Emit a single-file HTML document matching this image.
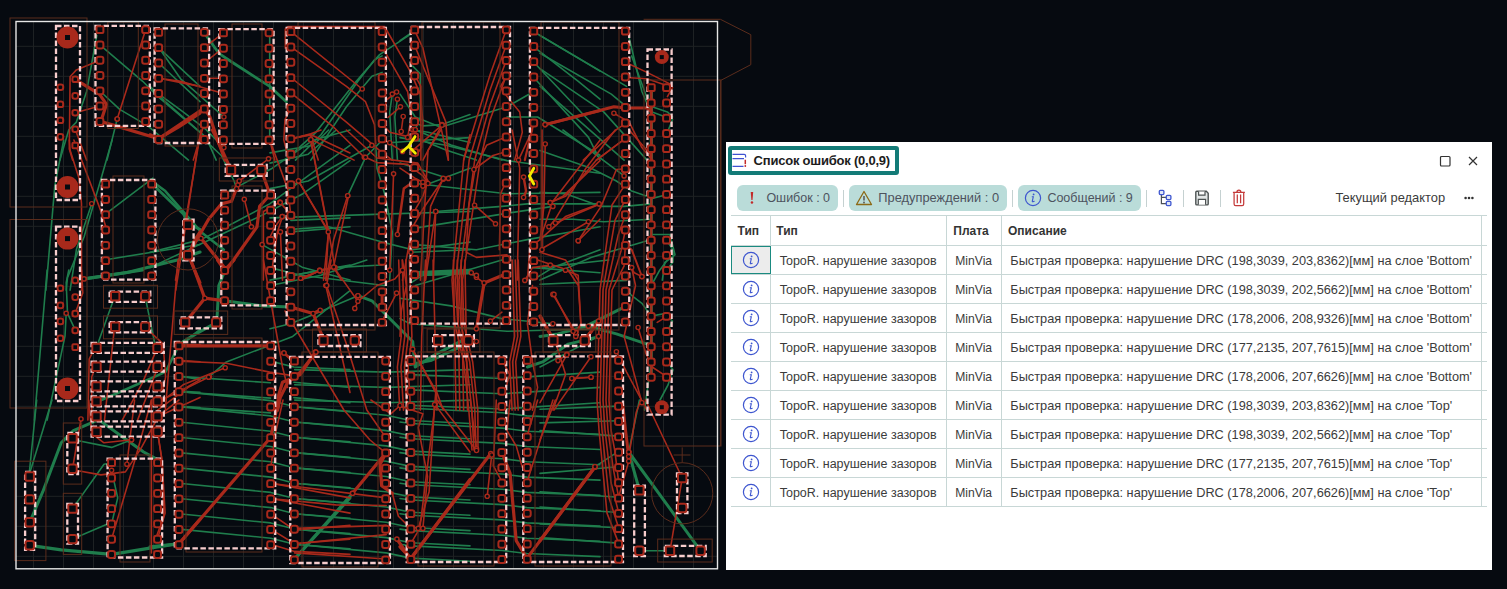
<!DOCTYPE html>
<html><head><meta charset="utf-8">
<style>
html,body{margin:0;padding:0;background:#060a10;width:1507px;height:589px;overflow:hidden;position:relative;font-family:"Liberation Sans",sans-serif}
</style></head><body>
<svg width="760" height="589" viewBox="0 0 760 589" style="position:absolute;left:0;top:0">
<style>.d{fill:none;stroke:#f7cdcd;stroke-width:2.3;stroke-dasharray:5.5 2.5} .b{fill:none;stroke:#5a2c1c;stroke-width:1} .p{fill:#060a10;stroke:#a8291b;stroke-width:2.0} .v{fill:#060a10;stroke:#a8291b;stroke-width:1.4} .tr{fill:none;stroke:#a8291b;stroke-linecap:round;stroke-linejoin:round} .tg{fill:none;stroke:#1f7d4c;stroke-linecap:round;stroke-linejoin:round}</style>
<path d="M33.5 21.5V568.8 M63.5 21.5V568.8 M93.5 21.5V568.8 M123.5 21.5V568.8 M153.5 21.5V568.8 M183.5 21.5V568.8 M213.5 21.5V568.8 M243.5 21.5V568.8 M273.5 21.5V568.8 M303.5 21.5V568.8 M333.5 21.5V568.8 M363.5 21.5V568.8 M393.5 21.5V568.8 M423.5 21.5V568.8 M453.5 21.5V568.8 M483.5 21.5V568.8 M513.5 21.5V568.8 M543.5 21.5V568.8 M573.5 21.5V568.8 M603.5 21.5V568.8 M633.5 21.5V568.8 M663.5 21.5V568.8 M693.5 21.5V568.8 M16 46.3H717 M16 76.3H717 M16 106.3H717 M16 136.3H717 M16 166.3H717 M16 196.3H717 M16 226.3H717 M16 256.3H717 M16 286.3H717 M16 316.3H717 M16 346.3H717 M16 376.3H717 M16 406.3H717 M16 436.3H717 M16 466.3H717 M16 496.3H717 M16 526.3H717 M16 556.3H717" stroke="#1e2224" stroke-width="1" fill="none"/>
<path d="M643.6 19.3H720.4L750.8 34.7V64.7L720.4 80.6V446" class="b"/>
<path d="M96.8 35.5 L86.6 91.5 L76.4 122.1 L68.8 129.7 L59.9 160.1" class="tg" stroke-width="1.6"/>
<path d="M99.9 44.9 L142.7 81.3 L158.0 96.6 L200.0 132.3" class="tg" stroke-width="1.6"/>
<path d="M99.9 91.0 L119.7 109.4 L147.8 125.9 L188.5 160.1" class="tg" stroke-width="1.6"/>
<path d="M117.2 119.0 L107.0 160.1" class="tg" stroke-width="1.6"/>
<path d="M158.7 47.7 L178.3 66.1 L200.0 86.4" class="tg" stroke-width="1.6"/>
<path d="M158.7 63.0 L200.0 101.7" class="tg" stroke-width="1.6"/>
<path d="M204.3 32.9 L218.8 53.3 L234.1 63.5 L269.7 86.4 L286.3 101.7" class="tg" stroke-width="2.8"/>
<path d="M158.9 47.7 L180.6 78.8 L201.0 96.6 L223.9 117.0" class="tg" stroke-width="1.6"/>
<path d="M158.9 94.1 L183.1 111.9 L206.1 129.7 L223.9 147.6" class="tg" stroke-width="1.6"/>
<path d="M150.0 86.4 L165.3 101.7 L206.1 137.4 L216.2 160.1" class="tg" stroke-width="1.6"/>
<path d="M269.7 32.9 L269.7 139.9" class="tg" stroke-width="1.6"/>
<path d="M412.7 32.9 L379.6 54.6 L354.1 83.9 L315.9 132.3 L285.3 160.1" class="tg" stroke-width="1.6"/>
<path d="M382.1 55.9 L374.5 59.7 L357.9 81.3 L321.0 134.8 L295.5 160.1" class="tg" stroke-width="1.6"/>
<path d="M382.1 72.4 L371.9 76.2 L346.4 106.8 L310.8 160.1" class="tg" stroke-width="1.6"/>
<path d="M470.0 114.5 L442.0 124.6 L422.9 125.9 L412.7 122.1" class="tg" stroke-width="1.6"/>
<path d="M470.0 142.5 L428.0 132.3 L412.7 129.7" class="tg" stroke-width="1.6"/>
<path d="M412.7 66.1 L420.3 73.7 L420.3 117.0 L415.2 129.7" class="tg" stroke-width="1.6"/>
<path d="M392.3 94.1 L389.7 111.9 L392.3 160.1" class="tg" stroke-width="1.6"/>
<path d="M397.4 99.2 L394.8 117.0 L397.4 160.1" class="tg" stroke-width="1.6"/>
<path d="M533.8 31.7 L600.0 71.1" class="tg" stroke-width="1.6"/>
<path d="M533.8 46.9 L578.3 81.3 L600.0 99.2" class="tg" stroke-width="1.6"/>
<path d="M533.8 62.2 L600.0 132.3" class="tg" stroke-width="1.6"/>
<path d="M533.8 77.5 L588.5 137.4 L600.0 160.1" class="tg" stroke-width="1.6"/>
<path d="M400.0 40.6 L414.8 30.4" class="tg" stroke-width="1.6"/>
<path d="M400.0 94.1 L415.3 117.0 L440.8 127.2 L507.0 106.8 L533.8 91.5" class="tg" stroke-width="1.6"/>
<path d="M415.3 129.7 L451.0 145.0 L501.9 160.1" class="tg" stroke-width="1.6"/>
<path d="M415.3 137.4 L445.9 150.1 L476.4 160.1" class="tg" stroke-width="1.6"/>
<path d="M507.0 117.0 L537.6 117.0 L600.0 155.2" class="tg" stroke-width="1.6"/>
<path d="M651.3 87.7 L651.3 160.1" class="tg" stroke-width="3.0"/>
<path d="M540.0 35.5 L626.6 86.4" class="tg" stroke-width="1.6"/>
<path d="M540.0 53.3 L611.3 94.1 L626.6 106.8" class="tg" stroke-width="1.6"/>
<path d="M540.0 68.6 L603.7 111.9 L647.0 160.1" class="tg" stroke-width="1.6"/>
<path d="M540.0 86.4 L624.1 160.1" class="tg" stroke-width="1.6"/>
<path d="M629.2 38.0 L641.9 91.5 L649.6 109.4" class="tg" stroke-width="1.6"/>
<path d="M631.7 55.9 L652.1 111.9 L672.5 119.6 L667.4 132.3" class="tg" stroke-width="1.6"/>
<path d="M652.1 106.8 L667.4 111.9 L672.5 117.0" class="tg" stroke-width="1.6"/>
<path d="M63.7 140.0 L54.8 185.9 L45.9 290.1" class="tg" stroke-width="1.6"/>
<path d="M112.1 140.0 L101.9 175.7 L84.1 236.8 L67.5 277.6 L66.2 290.1" class="tg" stroke-width="1.6"/>
<path d="M91.7 203.7 L76.4 249.6 L70.1 290.1" class="tg" stroke-width="1.6"/>
<path d="M152.9 178.2 L105.7 213.9" class="tg" stroke-width="1.6"/>
<path d="M152.9 184.6 L183.4 213.9 L188.5 224.1 L200.0 229.2" class="tg" stroke-width="2.8"/>
<path d="M105.7 259.7 L200.0 244.5" class="tg" stroke-width="1.6"/>
<path d="M75.2 280.1 L127.4 272.5 L178.3 259.7 L200.0 252.1" class="tg" stroke-width="3.2"/>
<path d="M150.0 179.7 L165.3 191.1 L201.0 231.9 L223.9 249.7" class="tg" stroke-width="2.5"/>
<path d="M201.0 136.4 L221.3 155.5 L234.1 181.0 L236.6 188.6" class="tg" stroke-width="1.6"/>
<path d="M350.0 130.0 L313.1 140.2 L272.3 168.2 L234.1 188.6 L223.9 193.7" class="tg" stroke-width="1.6"/>
<path d="M350.0 145.3 L308.0 175.9 L269.7 203.9 L226.4 226.8 L201.0 239.6 L150.0 252.3" class="tg" stroke-width="1.6"/>
<path d="M350.0 160.6 L302.9 193.7 L264.6 214.1 L226.4 231.9 L150.0 267.6" class="tg" stroke-width="1.6"/>
<path d="M290.9 220.4 L350.0 217.9" class="tg" stroke-width="1.6"/>
<path d="M290.9 231.9 L350.0 226.8" class="tg" stroke-width="1.6"/>
<path d="M262.1 244.6 L302.9 267.6 L350.0 280.1" class="tg" stroke-width="1.6"/>
<path d="M270.0 152.9 L313.3 145.3 L328.6 130.0" class="tg" stroke-width="1.6"/>
<path d="M270.0 163.1 L308.2 154.2 L336.2 130.0" class="tg" stroke-width="1.6"/>
<path d="M470.0 137.6 L422.9 140.2 L389.7 142.7" class="tg" stroke-width="1.6"/>
<path d="M270.0 217.9 L382.1 214.1 L470.0 211.5" class="tg" stroke-width="1.6"/>
<path d="M290.4 229.4 L328.6 226.8 L382.1 242.1 L412.7 249.7 L470.0 242.1" class="tg" stroke-width="1.6"/>
<path d="M270.0 188.6 L308.2 181.0 L371.9 145.3" class="tg" stroke-width="1.6"/>
<path d="M347.7 195.7 L365.5 157.3 L382.1 140.2" class="tg" stroke-width="1.6"/>
<path d="M382.1 265.0 L333.7 267.6 L270.0 280.1" class="tg" stroke-width="1.6"/>
<path d="M410.9 252.3 L470.0 249.7" class="tg" stroke-width="1.6"/>
<path d="M470.0 168.2 L422.9 186.1" class="tg" stroke-width="1.6"/>
<path d="M375.7 145.3 L377.0 168.2 L384.6 193.7 L392.3 231.9 L389.7 280.1" class="tg" stroke-width="1.6"/>
<path d="M410.9 282.9 L422.9 275.2 L470.0 272.7" class="tg" stroke-width="1.6"/>
<path d="M400.0 137.6 L445.9 145.3 L507.0 160.6 L600.0 173.3" class="tg" stroke-width="1.6"/>
<path d="M400.0 163.1 L448.4 178.4" class="tg" stroke-width="1.6"/>
<path d="M415.3 183.5 L507.0 193.7 L600.0 192.4" class="tg" stroke-width="1.6"/>
<path d="M435.7 211.5 L501.9 206.4 L527.4 203.9 L600.0 203.9" class="tg" stroke-width="1.6"/>
<path d="M415.3 228.1 L501.9 214.1 L552.9 206.4" class="tg" stroke-width="1.6"/>
<path d="M415.3 244.6 L476.4 249.7 L527.4 239.6 L600.0 226.8" class="tg" stroke-width="1.6"/>
<path d="M410.2 273.9 L471.3 272.7" class="tg" stroke-width="3.0"/>
<path d="M600.0 249.7 L552.9 267.6 L532.5 280.1" class="tg" stroke-width="1.6"/>
<path d="M532.5 267.6 L600.0 272.7" class="tg" stroke-width="1.6"/>
<path d="M562.9 130.0 L624.1 175.9" class="tg" stroke-width="1.6"/>
<path d="M540.0 150.4 L591.0 168.2 L616.4 181.0 L631.7 191.1 L647.0 196.2" class="tg" stroke-width="1.6"/>
<path d="M540.0 192.4 L565.5 193.7 L601.1 206.4 L624.1 206.4 L651.3 203.9" class="tg" stroke-width="1.6"/>
<path d="M540.0 219.2 L573.1 219.2 L603.7 221.7 L651.3 219.2" class="tg" stroke-width="1.6"/>
<path d="M651.3 198.8 L669.9 193.7" class="tg" stroke-width="1.6"/>
<path d="M651.3 234.5 L669.9 234.5 L675.0 254.8 L664.8 262.5 L662.3 280.1" class="tg" stroke-width="1.6"/>
<path d="M540.0 280.1 L591.0 257.4 L651.3 239.6" class="tg" stroke-width="1.6"/>
<path d="M47.1 270.0 L34.4 420.1" class="tg" stroke-width="1.6"/>
<path d="M68.8 270.0 L66.2 282.7 L67.5 313.3 L75.2 329.9" class="tg" stroke-width="1.6"/>
<path d="M66.2 313.3 L65.0 336.2 L47.1 420.1" class="tg" stroke-width="1.6"/>
<path d="M84.1 278.9 L142.7 270.0" class="tg" stroke-width="3.0"/>
<path d="M114.6 296.8 L96.8 346.4" class="tg" stroke-width="1.6"/>
<path d="M145.2 296.8 L155.4 346.4" class="tg" stroke-width="1.6"/>
<path d="M200.0 329.9 L178.3 346.4 L165.6 371.9 L122.3 391.0 L95.5 402.5" class="tg" stroke-width="2.5"/>
<path d="M178.3 375.7 L200.0 379.6" class="tg" stroke-width="1.6"/>
<path d="M178.3 391.0 L200.0 392.3" class="tg" stroke-width="1.6"/>
<path d="M178.3 406.3 L200.0 407.6" class="tg" stroke-width="1.6"/>
<path d="M224.6 271.5 L218.8 285.5 L216.8 322.4 L195.9 333.9 L179.3 344.1" class="tg" stroke-width="3.0"/>
<path d="M224.6 300.8 L263.4 305.9 L290.9 307.1" class="tg" stroke-width="3.0"/>
<path d="M350.0 290.6 L292.7 336.4 L226.4 361.9 L208.6 377.2" class="tg" stroke-width="1.6"/>
<path d="M350.0 265.1 L292.7 275.3" class="tg" stroke-width="1.6"/>
<path d="M270.5 361.1 L293.9 367.0 L350.0 369.6" class="tg" stroke-width="1.6"/>
<path d="M178.8 376.4 L270.5 382.8" class="tg" stroke-width="1.6"/>
<path d="M178.8 391.7 L270.5 398.1" class="tg" stroke-width="1.6"/>
<path d="M178.8 406.5 L270.5 412.9" class="tg" stroke-width="1.6"/>
<path d="M293.9 382.3 L350.0 387.4" class="tg" stroke-width="1.6"/>
<path d="M293.9 397.6 L350.0 402.7" class="tg" stroke-width="1.6"/>
<path d="M357.9 295.7 L371.9 300.8 L412.7 341.5 L415.2 367.0 L435.6 354.3 L470.0 336.4" class="tg" stroke-width="3.0"/>
<path d="M411.4 272.7 L470.0 270.2" class="tg" stroke-width="3.0"/>
<path d="M357.9 295.7 L315.9 313.5 L290.4 323.7 L270.0 328.8" class="tg" stroke-width="1.6"/>
<path d="M270.0 267.6 L300.6 275.3 L384.6 285.5" class="tg" stroke-width="1.6"/>
<path d="M270.0 285.5 L321.0 275.3 L366.8 260.0" class="tg" stroke-width="1.6"/>
<path d="M294.7 369.6 L386.4 372.1 L470.0 369.6" class="tg" stroke-width="1.6"/>
<path d="M294.7 384.8 L386.4 387.4 L470.0 384.8" class="tg" stroke-width="1.6"/>
<path d="M294.7 400.1 L386.4 402.7 L470.0 400.1" class="tg" stroke-width="1.6"/>
<path d="M410.2 275.3 L468.8 272.7 L476.4 275.3" class="tg" stroke-width="3.0"/>
<path d="M415.3 285.5 L501.9 260.0" class="tg" stroke-width="1.6"/>
<path d="M400.0 298.2 L451.0 305.9 L501.9 318.6 L552.9 323.7" class="tg" stroke-width="1.6"/>
<path d="M410.2 364.5 L430.6 360.6 L463.7 345.4 L476.4 341.5" class="tg" stroke-width="3.0"/>
<path d="M400.0 318.6 L410.2 323.7 L507.0 331.3 L600.0 328.8" class="tg" stroke-width="1.6"/>
<path d="M527.4 367.0 L542.7 361.9 L568.2 344.1 L600.0 336.4" class="tg" stroke-width="3.0"/>
<path d="M410.2 374.6 L501.9 378.5 L600.0 372.1" class="tg" stroke-width="1.6"/>
<path d="M410.2 389.9 L501.9 393.8 L600.0 387.4" class="tg" stroke-width="1.6"/>
<path d="M410.2 405.2 L501.9 409.0 L600.0 402.7" class="tg" stroke-width="1.6"/>
<path d="M540.0 267.6 L608.8 260.0" class="tg" stroke-width="1.6"/>
<path d="M540.0 284.2 L626.6 280.4" class="tg" stroke-width="1.6"/>
<path d="M626.6 305.9 L606.2 316.1 L585.9 326.2 L557.8 333.9 L540.0 336.4" class="tg" stroke-width="3.0"/>
<path d="M588.4 326.2 L616.4 333.9 L647.0 344.1" class="tg" stroke-width="3.0"/>
<path d="M625.4 290.6 L641.9 303.3 L651.3 316.1" class="tg" stroke-width="1.6"/>
<path d="M540.0 367.0 L598.6 336.4" class="tg" stroke-width="1.6"/>
<path d="M651.3 361.9 L644.5 410.1" class="tg" stroke-width="1.6"/>
<path d="M667.4 260.0 L659.7 270.2 L651.3 285.5" class="tg" stroke-width="1.6"/>
<path d="M651.3 316.1 L664.8 313.5 L672.5 321.1 L667.4 331.3" class="tg" stroke-width="1.6"/>
<path d="M29.1 474.9 L36.7 400.0" class="tg" stroke-width="1.6"/>
<path d="M30.6 470.3 L52.0 400.0" class="tg" stroke-width="1.6"/>
<path d="M29.7 545.3 L61.2 549.8 L111.6 554.4 L157.5 546.8 L178.9 543.7" class="tg" stroke-width="3.2"/>
<path d="M29.7 522.3 L42.8 491.7 L61.2 442.8 L73.4 430.6 L94.8 421.4" class="tg" stroke-width="3.0"/>
<path d="M72.5 508.6 L104.0 464.2 L111.6 462.7" class="tg" stroke-width="1.6"/>
<path d="M72.5 539.1 L111.6 522.3" class="tg" stroke-width="1.6"/>
<path d="M100.9 421.4 L122.3 436.7 L143.7 452.0 L157.5 459.6" class="tg" stroke-width="3.0"/>
<path d="M111.6 470.3 L117.7 497.9 L111.6 523.9" class="tg" stroke-width="1.6"/>
<path d="M73.4 439.8 L111.6 447.4 L131.5 439.8" class="tg" stroke-width="1.6"/>
<path d="M179.1 406.7 L270.8 415.9 L294.6 422.0 L350.0 426.6" class="tg" stroke-width="1.6"/>
<path d="M179.1 422.0 L270.8 431.2 L294.6 437.3 L350.0 441.9" class="tg" stroke-width="1.6"/>
<path d="M179.1 437.3 L270.8 446.5 L294.6 452.6 L350.0 457.2" class="tg" stroke-width="1.6"/>
<path d="M179.1 452.6 L270.8 461.8 L294.6 467.9 L350.0 472.5" class="tg" stroke-width="1.6"/>
<path d="M179.1 467.9 L270.8 477.1 L294.6 483.2 L350.0 487.8" class="tg" stroke-width="1.6"/>
<path d="M179.1 483.2 L270.8 492.4 L294.6 498.5 L350.0 503.1" class="tg" stroke-width="1.6"/>
<path d="M179.1 498.5 L270.8 507.6 L294.6 513.8 L350.0 518.3" class="tg" stroke-width="1.6"/>
<path d="M179.1 513.8 L270.8 522.9 L294.6 529.1 L350.0 533.6" class="tg" stroke-width="1.6"/>
<path d="M179.1 529.1 L270.8 538.2 L294.6 544.3 L350.0 548.9" class="tg" stroke-width="1.6"/>
<path d="M179.1 391.4 L270.8 400.6 L294.6 406.7 L350.0 411.3" class="tg" stroke-width="1.6"/>
<path d="M294.6 559.0 L350.0 497.9" class="tg" stroke-width="3.0"/>
<path d="M150.0 546.8 L179.1 543.7" class="tg" stroke-width="3.0"/>
<path d="M294.5 406.7 L386.2 415.3 L410.7 420.5 L470.0 423.5" class="tg" stroke-width="1.6"/>
<path d="M294.5 422.0 L386.2 430.6 L410.7 435.8 L470.0 438.8" class="tg" stroke-width="1.6"/>
<path d="M294.5 437.3 L386.2 445.9 L410.7 451.1 L470.0 454.1" class="tg" stroke-width="1.6"/>
<path d="M294.5 452.6 L386.2 461.2 L410.7 466.4 L470.0 469.4" class="tg" stroke-width="1.6"/>
<path d="M294.5 467.9 L386.2 476.5 L410.7 481.7 L470.0 484.7" class="tg" stroke-width="1.6"/>
<path d="M294.5 483.2 L386.2 491.7 L410.7 496.9 L470.0 500.0" class="tg" stroke-width="1.6"/>
<path d="M294.5 498.5 L386.2 507.0 L410.7 512.2 L470.0 515.3" class="tg" stroke-width="1.6"/>
<path d="M294.5 513.8 L386.2 522.3 L410.7 527.5 L470.0 530.6" class="tg" stroke-width="1.6"/>
<path d="M294.5 529.1 L386.2 537.6 L410.7 542.8 L470.0 545.9" class="tg" stroke-width="1.6"/>
<path d="M294.5 544.3 L386.2 552.9 L410.7 558.1 L470.0 561.2" class="tg" stroke-width="1.6"/>
<path d="M294.5 559.0 L352.6 493.3" class="tg" stroke-width="3.0"/>
<path d="M400.0 406.7 L410.7 408.3 L502.4 412.8 L526.9 415.9 L600.0 419.0" class="tg" stroke-width="1.6"/>
<path d="M400.0 422.0 L410.7 423.5 L502.4 428.1 L526.9 431.2 L600.0 434.3" class="tg" stroke-width="1.6"/>
<path d="M400.0 437.3 L410.7 438.8 L502.4 443.4 L526.9 446.5 L600.0 449.5" class="tg" stroke-width="1.6"/>
<path d="M400.0 452.6 L410.7 454.1 L502.4 458.7 L526.9 461.8 L600.0 464.8" class="tg" stroke-width="1.6"/>
<path d="M400.0 467.9 L410.7 469.4 L502.4 474.0 L526.9 477.1 L600.0 480.1" class="tg" stroke-width="1.6"/>
<path d="M400.0 483.2 L410.7 484.7 L502.4 489.3 L526.9 492.4 L600.0 495.4" class="tg" stroke-width="1.6"/>
<path d="M400.0 498.5 L410.7 500.0 L502.4 504.6 L526.9 507.6 L600.0 510.7" class="tg" stroke-width="1.6"/>
<path d="M400.0 513.8 L410.7 515.3 L502.4 519.9 L526.9 522.9 L600.0 526.0" class="tg" stroke-width="1.6"/>
<path d="M400.0 529.1 L410.7 530.6 L502.4 535.2 L526.9 538.2 L600.0 541.3" class="tg" stroke-width="1.6"/>
<path d="M400.0 544.3 L410.7 545.9 L502.4 550.5 L526.9 553.5 L600.0 556.6" class="tg" stroke-width="1.6"/>
<path d="M540.0 409.2 L618.6 406.1" class="tg" stroke-width="1.6"/>
<path d="M540.0 422.9 L618.6 420.8" class="tg" stroke-width="1.6"/>
<path d="M540.0 430.6 L618.6 436.1" class="tg" stroke-width="1.6"/>
<path d="M540.0 473.4 L618.6 466.7" class="tg" stroke-width="1.6"/>
<path d="M540.0 491.7 L618.6 497.2" class="tg" stroke-width="1.6"/>
<path d="M540.0 507.0 L618.6 512.5" class="tg" stroke-width="1.6"/>
<path d="M540.0 523.9 L618.6 527.8" class="tg" stroke-width="1.6"/>
<path d="M540.0 537.6 L618.6 543.1" class="tg" stroke-width="1.6"/>
<path d="M628.7 452.0 L639.4 490.2" class="tg" stroke-width="3.0"/>
<path d="M628.7 452.0 L700.6 550.8" class="tg" stroke-width="3.0"/>
<path d="M639.4 400.0 L628.7 452.0" class="tg" stroke-width="1.6"/>
<path d="M639.4 550.8 L670.0 550.8" class="tg" stroke-width="1.6"/>
<path d="M595.0 466.7 L618.6 451.4" class="tg" stroke-width="1.6"/>
<path d="M651.3 87.7 L651.3 377.2" class="tg" stroke-width="3.0"/>
<path d="M666.6 240.0 L673.0 250.0 L673.0 262.0 L666.6 270.0" class="tg" stroke-width="1.6"/>
<path d="M666.6 360.0 L673.0 370.0 L668.0 385.0 L660.0 400.0" class="tg" stroke-width="1.6"/>
<path d="M75.2 79.3 L99.4 94.1 L106.5 104.3 L101.9 118.3 L99.9 121.3" class="tr" stroke-width="3.2"/>
<path d="M99.9 121.3 L115.9 125.9 L158.7 138.7 L178.3 127.2 L200.0 113.2" class="tr" stroke-width="3.2"/>
<path d="M99.9 60.2 L76.4 69.9 L70.1 76.8 L69.3 148.9 L72.6 160.1" class="tr" stroke-width="1.6"/>
<path d="M75.2 112.7 L99.9 106.1" class="tr" stroke-width="1.6"/>
<path d="M145.7 29.6 L117.2 119.0" class="tr" stroke-width="1.6"/>
<path d="M75.2 129.2 L86.6 160.1" class="tr" stroke-width="1.6"/>
<path d="M158.7 78.3 L200.0 86.4" class="tr" stroke-width="1.6"/>
<path d="M150.0 134.8 L158.9 138.7 L204.3 108.1 L209.9 117.0 L217.5 139.9 L225.2 160.1" class="tr" stroke-width="3.2"/>
<path d="M158.9 78.3 L180.6 81.3 L223.4 93.6" class="tr" stroke-width="1.6"/>
<path d="M204.3 63.0 L223.4 47.7" class="tr" stroke-width="1.6"/>
<path d="M204.3 47.7 L223.4 32.9" class="tr" stroke-width="1.6"/>
<path d="M204.3 78.3 L223.4 78.3" class="tr" stroke-width="1.6"/>
<path d="M204.3 123.4 L193.3 160.1" class="tr" stroke-width="1.6"/>
<path d="M290.9 138.7 L310.5 134.8 L318.2 160.1" class="tr" stroke-width="1.6"/>
<path d="M290.9 108.1 L285.0 119.6 L283.8 139.9 L288.9 160.1" class="tr" stroke-width="1.6"/>
<path d="M269.7 139.9 L274.8 160.1" class="tr" stroke-width="1.6"/>
<path d="M290.9 31.7 L362.2 89.0" class="tr" stroke-width="1.6"/>
<path d="M290.9 46.9 L346.4 86.4 L365.5 101.7 L374.5 124.6 L375.7 143.8" class="tr" stroke-width="1.6"/>
<path d="M290.9 77.5 L346.4 122.1 L382.1 152.7 L392.3 160.1" class="tr" stroke-width="1.6"/>
<path d="M290.9 92.8 L333.7 127.2 L364.3 157.3" class="tr" stroke-width="1.6"/>
<path d="M285.3 48.2 L285.3 29.1 L287.8 26.6 L384.6 26.6 L389.7 35.5 L410.1 71.1 L420.3 94.1 L422.9 122.1 L421.6 147.6 L415.2 156.5" class="tr" stroke-width="1.6"/>
<path d="M382.1 46.9 L397.4 73.7 L407.6 91.5 L411.4 117.0 L407.6 137.4" class="tr" stroke-width="1.6"/>
<path d="M414.7 30.4 L422.9 48.2 L448.3 160.1" class="tr" stroke-width="1.6"/>
<path d="M382.1 123.4 L389.7 132.3 L411.4 137.4" class="tr" stroke-width="1.6"/>
<path d="M382.1 138.7 L402.5 151.4" class="tr" stroke-width="1.6"/>
<path d="M396.6 92.0 L385.9 100.4 L385.9 117.0" class="tr" stroke-width="1.6"/>
<path d="M400.4 106.8 L388.0 117.5" class="tr" stroke-width="1.6"/>
<path d="M403.2 116.5 L401.2 131.5" class="tr" stroke-width="1.6"/>
<path d="M442.0 124.6 L422.9 160.1" class="tr" stroke-width="1.6"/>
<path d="M470.0 134.8 L463.6 160.1" class="tr" stroke-width="1.6"/>
<path d="M310.8 139.4 L354.1 160.1" class="tr" stroke-width="1.6"/>
<path d="M414.8 45.7 L445.9 122.1 L448.4 160.1" class="tr" stroke-width="1.6"/>
<path d="M506.5 76.2 L500.6 86.4 L507.0 96.6 L519.7 111.9 L522.3 132.3 L514.6 160.1" class="tr" stroke-width="1.6"/>
<path d="M533.8 122.1 L524.8 160.1" class="tr" stroke-width="2.2"/>
<path d="M545.2 124.6 L600.0 110.6" class="tr" stroke-width="3.0"/>
<path d="M442.0 125.2 L410.2 152.7" class="tr" stroke-width="1.6"/>
<path d="M415.3 76.2 L420.9 86.4 L420.9 160.1" class="tr" stroke-width="1.6"/>
<path d="M545.1 124.6 L613.9 106.8 L625.4 108.1 L647.0 108.1 L651.3 111.9" class="tr" stroke-width="3.0"/>
<path d="M625.4 62.2 L647.0 72.4 L669.9 83.9 L672.5 87.7 L667.4 96.6" class="tr" stroke-width="1.6"/>
<path d="M625.4 77.5 L647.0 78.8 L662.3 83.9 L667.4 87.7" class="tr" stroke-width="1.6"/>
<path d="M651.3 87.7 L651.3 160.1" class="tr" stroke-width="2.0"/>
<path d="M613.9 113.2 L629.2 122.1 L641.9 147.6 L652.1 160.1" class="tr" stroke-width="1.6"/>
<path d="M625.4 123.4 L616.4 129.7 L583.3 160.1" class="tr" stroke-width="1.6"/>
<path d="M625.4 138.7 L596.1 160.1" class="tr" stroke-width="1.6"/>
<path d="M69.3 140.0 L70.1 150.2 L79.0 178.2 L81.5 203.7 L81.5 290.1" class="tr" stroke-width="1.6"/>
<path d="M73.9 140.0 L86.6 173.1 L101.9 213.9 L105.7 226.6" class="tr" stroke-width="1.6"/>
<path d="M198.7 140.0 L175.8 290.1" class="tr" stroke-width="1.6"/>
<path d="M188.5 255.9 L193.6 241.9 L200.0 231.7" class="tr" stroke-width="3.0"/>
<path d="M188.5 255.9 L200.0 282.7" class="tr" stroke-width="3.0"/>
<path d="M188.2 254.8 L208.6 219.2 L221.3 203.9 L231.5 201.3 L237.9 184.8" class="tr" stroke-width="3.2"/>
<path d="M231.0 170.0 L217.5 140.2 L212.4 130.0" class="tr" stroke-width="3.2"/>
<path d="M261.3 170.0 L269.7 193.7" class="tr" stroke-width="3.2"/>
<path d="M269.7 195.0 L259.6 206.4 L257.0 226.8 L226.4 270.1 L201.0 238.3" class="tr" stroke-width="3.2"/>
<path d="M201.0 130.0 L175.5 280.1" class="tr" stroke-width="1.6"/>
<path d="M268.5 158.8 L239.2 181.0" class="tr" stroke-width="1.6"/>
<path d="M244.3 199.3 L251.4 226.8" class="tr" stroke-width="1.6"/>
<path d="M279.9 202.1 L263.4 211.5 L263.4 280.1" class="tr" stroke-width="1.6"/>
<path d="M282.5 216.6 L277.4 231.9 L272.3 267.6" class="tr" stroke-width="1.6"/>
<path d="M280.4 231.9 L282.5 280.1" class="tr" stroke-width="1.6"/>
<path d="M269.7 139.7 L287.6 188.6 L290.9 215.4" class="tr" stroke-width="1.6"/>
<path d="M310.5 139.7 L328.3 231.9 L325.8 280.1" class="tr" stroke-width="1.6"/>
<path d="M298.5 181.0 L328.3 231.9" class="tr" stroke-width="1.6"/>
<path d="M348.7 195.0 L333.4 267.6 L320.7 270.1 L300.3 280.1" class="tr" stroke-width="1.6"/>
<path d="M290.9 138.9 L310.5 134.6 L350.0 152.9" class="tr" stroke-width="1.6"/>
<path d="M290.9 138.9 L310.8 133.8 L321.0 130.0" class="tr" stroke-width="1.6"/>
<path d="M310.8 139.7 L328.6 231.9 L323.5 280.1" class="tr" stroke-width="1.6"/>
<path d="M298.5 181.0 L328.6 231.4 L335.0 267.6" class="tr" stroke-width="1.6"/>
<path d="M347.7 195.7 L333.7 239.6 L326.1 280.1" class="tr" stroke-width="1.6"/>
<path d="M346.4 130.0 L377.0 158.0 L417.8 163.1 L428.0 181.0 L422.9 196.2 L412.7 214.1" class="tr" stroke-width="1.6"/>
<path d="M365.5 157.3 L377.0 162.6 L407.6 164.4 L422.9 175.9 L428.0 183.5" class="tr" stroke-width="1.6"/>
<path d="M393.6 173.8 L389.7 270.1" class="tr" stroke-width="1.6"/>
<path d="M410.9 183.5 L403.8 188.6 L397.4 234.5" class="tr" stroke-width="2.5"/>
<path d="M443.2 179.2 L422.9 209.0 L412.7 226.8 L407.6 252.3 L402.5 280.1" class="tr" stroke-width="1.6"/>
<path d="M435.6 211.5 L425.4 280.1" class="tr" stroke-width="1.6"/>
<path d="M319.7 270.1 L300.6 280.1" class="tr" stroke-width="1.6"/>
<path d="M333.7 267.6 L341.3 280.1" class="tr" stroke-width="1.6"/>
<path d="M280.2 202.6 L290.4 214.1" class="tr" stroke-width="1.6"/>
<path d="M282.2 216.6 L275.1 226.8 L270.0 237.0" class="tr" stroke-width="1.6"/>
<path d="M440.8 130.0 L428.0 150.4 L420.4 280.1" class="tr" stroke-width="1.6"/>
<path d="M443.3 178.4 L430.6 206.4 L425.5 280.1" class="tr" stroke-width="1.6"/>
<path d="M435.7 211.5 L433.1 280.1" class="tr" stroke-width="1.6"/>
<path d="M505.7 136.9 L486.6 145.3 L475.2 168.2 L468.8 206.4 L466.2 252.3 L476.4 257.4 L507.0 254.8" class="tr" stroke-width="1.6"/>
<path d="M473.9 169.5 L493.0 155.5 L505.7 151.7" class="tr" stroke-width="1.6"/>
<path d="M474.6 205.2 L495.5 223.8" class="tr" stroke-width="1.6"/>
<path d="M505.7 182.2 L500.6 193.7 L499.4 249.7" class="tr" stroke-width="1.6"/>
<path d="M512.1 130.0 L519.7 168.2 L517.2 280.1" class="tr" stroke-width="1.6"/>
<path d="M545.2 144.0 L543.9 206.4 L540.1 239.6" class="tr" stroke-width="1.6"/>
<path d="M600.0 140.2 L552.9 201.3 L540.1 239.6 L529.9 247.2 L527.4 280.1" class="tr" stroke-width="1.6"/>
<path d="M600.0 160.6 L563.1 196.2 L550.3 202.6" class="tr" stroke-width="1.6"/>
<path d="M600.0 203.9 L555.4 223.0" class="tr" stroke-width="1.6"/>
<path d="M578.3 240.8 L600.0 219.2" class="tr" stroke-width="1.6"/>
<path d="M422.9 182.2 L415.3 178.4 L400.0 168.2" class="tr" stroke-width="1.6"/>
<path d="M523.6 177.1 L526.1 191.1 L523.6 197.5" class="tr" stroke-width="2.5"/>
<path d="M518.5 160.1 L523.6 149.1 L532.5 130.0" class="tr" stroke-width="1.6"/>
<path d="M625.4 138.2 L596.1 160.6 L565.5 196.2 L550.2 202.6" class="tr" stroke-width="1.6"/>
<path d="M615.2 130.0 L585.9 168.2 L555.3 219.2 L548.9 226.8" class="tr" stroke-width="1.6"/>
<path d="M625.4 168.7 L616.4 169.5 L601.1 206.4 L578.2 240.8" class="tr" stroke-width="1.6"/>
<path d="M599.1 203.9 L565.5 216.6 L540.0 239.6" class="tr" stroke-width="1.6"/>
<path d="M588.4 221.7 L540.0 249.7" class="tr" stroke-width="1.6"/>
<path d="M625.4 244.6 L631.7 249.7 L641.9 276.5" class="tr" stroke-width="2.0"/>
<path d="M629.2 130.0 L647.0 150.4 L651.3 155.5" class="tr" stroke-width="1.6"/>
<path d="M542.0 130.0 L542.0 249.7" class="tr" stroke-width="1.6"/>
<path d="M540.0 252.3 L565.5 259.9 L578.2 280.1" class="tr" stroke-width="1.6"/>
<path d="M81.5 270.0 L82.8 292.9 L75.2 313.3" class="tr" stroke-width="1.6"/>
<path d="M114.6 326.1 L104.5 420.1" class="tr" stroke-width="1.6"/>
<path d="M145.2 327.3 L163.1 343.9 L165.6 377.0 L163.1 389.7" class="tr" stroke-width="1.6"/>
<path d="M158.0 346.4 L142.7 382.1 L122.3 420.1" class="tr" stroke-width="1.6"/>
<path d="M158.0 366.8 L137.6 420.1" class="tr" stroke-width="1.6"/>
<path d="M95.5 346.4 L89.2 359.2 L87.9 420.1" class="tr" stroke-width="1.6"/>
<path d="M95.5 366.8 L91.7 377.0 L91.7 420.1" class="tr" stroke-width="1.6"/>
<path d="M158.0 401.2 L178.3 392.3 L200.0 379.6" class="tr" stroke-width="1.6"/>
<path d="M158.0 416.5 L200.0 397.4" class="tr" stroke-width="1.6"/>
<path d="M178.3 345.2 L200.0 345.2" class="tr" stroke-width="3.0"/>
<path d="M178.3 360.4 L200.0 361.7" class="tr" stroke-width="1.6"/>
<path d="M190.8 260.0 L204.8 298.2 L185.2 322.4" class="tr" stroke-width="3.2"/>
<path d="M204.8 298.2 L224.6 300.8" class="tr" stroke-width="3.2"/>
<path d="M217.5 260.0 L224.6 270.2 L234.1 260.0" class="tr" stroke-width="3.2"/>
<path d="M178.8 345.9 L270.5 345.9" class="tr" stroke-width="3.2"/>
<path d="M290.9 307.1 L313.1 313.5 L324.0 340.3" class="tr" stroke-width="3.2"/>
<path d="M313.1 313.5 L320.2 310.2" class="tr" stroke-width="3.2"/>
<path d="M315.6 351.7 L300.3 374.6 L282.5 382.3 L278.7 395.0 L277.4 410.1" class="tr" stroke-width="3.2"/>
<path d="M293.9 361.9 L283.8 353.0" class="tr" stroke-width="2.5"/>
<path d="M178.0 260.0 L165.3 410.1" class="tr" stroke-width="1.6"/>
<path d="M178.8 361.1 L226.4 363.2 L269.7 372.1 L293.9 375.9" class="tr" stroke-width="1.6"/>
<path d="M209.4 376.7 L188.2 387.4 L157.6 410.1" class="tr" stroke-width="1.6"/>
<path d="M225.2 367.8 L183.1 384.8 L160.2 402.7" class="tr" stroke-width="1.6"/>
<path d="M263.4 260.0 L282.5 367.0 L287.6 387.4" class="tr" stroke-width="1.6"/>
<path d="M325.8 285.5 L350.0 392.5" class="tr" stroke-width="1.6"/>
<path d="M301.1 278.3 L320.2 270.7" class="tr" stroke-width="1.6"/>
<path d="M300.6 278.3 L319.7 270.7" class="tr" stroke-width="1.6"/>
<path d="M333.7 267.1 L357.9 301.3" class="tr" stroke-width="1.6"/>
<path d="M326.6 285.5 L331.1 260.0" class="tr" stroke-width="1.6"/>
<path d="M354.8 308.4 L357.9 301.3 L377.0 285.5 L394.8 279.1 L402.5 270.2" class="tr" stroke-width="1.6"/>
<path d="M382.1 291.8 L382.1 305.9" class="tr" stroke-width="3.0"/>
<path d="M396.6 293.1 L382.1 321.1" class="tr" stroke-width="1.6"/>
<path d="M398.7 260.0 L401.2 336.4 L397.4 367.0 L399.9 410.1" class="tr" stroke-width="1.6"/>
<path d="M402.2 260.0 L404.8 336.4 L401.0 367.0 L403.5 410.1" class="tr" stroke-width="1.6"/>
<path d="M405.8 260.0 L408.3 336.4 L404.5 367.0 L407.1 410.1" class="tr" stroke-width="1.6"/>
<path d="M409.4 260.0 L411.9 336.4 L408.1 367.0 L410.6 410.1" class="tr" stroke-width="1.6"/>
<path d="M412.2 349.2 L436.9 392.5 L443.2 410.1" class="tr" stroke-width="1.6"/>
<path d="M433.1 260.0 L436.9 410.1" class="tr" stroke-width="1.6"/>
<path d="M453.4 260.0 L456.0 410.1" class="tr" stroke-width="1.6"/>
<path d="M457.3 260.0 L459.8 410.1" class="tr" stroke-width="1.6"/>
<path d="M461.1 260.0 L463.6 410.1" class="tr" stroke-width="1.6"/>
<path d="M464.9 260.0 L467.5 410.1" class="tr" stroke-width="1.6"/>
<path d="M315.9 352.2 L300.6 372.1 L287.8 382.3 L280.2 397.6 L277.6 410.1" class="tr" stroke-width="3.2"/>
<path d="M284.0 353.0 L294.2 360.6" class="tr" stroke-width="1.6"/>
<path d="M505.7 274.0 L484.1 282.9 L476.4 328.8" class="tr" stroke-width="3.2"/>
<path d="M484.1 282.9 L476.4 277.3" class="tr" stroke-width="1.6"/>
<path d="M501.9 312.2 L490.4 321.1" class="tr" stroke-width="1.6"/>
<path d="M512.1 260.0 L514.6 336.4 L509.6 361.9 L512.1 410.1" class="tr" stroke-width="1.6"/>
<path d="M515.2 260.0 L517.7 336.4 L512.6 361.9 L515.2 410.1" class="tr" stroke-width="1.6"/>
<path d="M518.2 260.0 L520.8 336.4 L515.7 361.9 L518.2 410.1" class="tr" stroke-width="1.6"/>
<path d="M425.5 260.0 L421.7 336.4 L420.4 410.1" class="tr" stroke-width="1.6"/>
<path d="M412.7 349.2 L435.7 392.5 L434.4 410.1" class="tr" stroke-width="1.6"/>
<path d="M402.5 260.0 L406.4 285.5 L401.3 311.0 L400.0 336.4" class="tr" stroke-width="1.6"/>
<path d="M540.1 316.1 L552.9 339.0" class="tr" stroke-width="3.2"/>
<path d="M584.7 340.3 L600.0 319.9" class="tr" stroke-width="3.2"/>
<path d="M550.3 265.1 L532.5 267.6 L524.8 280.4" class="tr" stroke-width="1.6"/>
<path d="M537.6 260.0 L568.2 270.2 L578.3 285.5 L580.9 323.7 L575.8 336.4" class="tr" stroke-width="1.6"/>
<path d="M552.9 294.4 L575.8 332.6" class="tr" stroke-width="1.6"/>
<path d="M532.5 285.5 L527.4 323.7 L532.5 361.9 L537.6 387.4 L532.5 410.1" class="tr" stroke-width="1.6"/>
<path d="M558.0 360.6 L566.9 354.3" class="tr" stroke-width="1.6"/>
<path d="M572.0 378.5 L591.1 377.2" class="tr" stroke-width="1.6"/>
<path d="M555.4 341.5 L565.6 374.6 L552.9 410.1" class="tr" stroke-width="1.6"/>
<path d="M500.6 356.8 L509.6 374.6 L504.5 392.5" class="tr" stroke-width="1.6"/>
<path d="M625.4 260.0 L634.3 272.7 L641.9 276.6" class="tr" stroke-width="1.6"/>
<path d="M631.7 267.6 L635.5 285.5 L624.1 336.4 L641.9 402.7" class="tr" stroke-width="1.6"/>
<path d="M616.4 351.7 L626.6 372.1 L647.0 410.1" class="tr" stroke-width="1.6"/>
<path d="M638.1 327.5 L645.7 353.0 L652.1 367.0 L667.4 377.2" class="tr" stroke-width="1.6"/>
<path d="M657.2 322.4 L667.4 316.1" class="tr" stroke-width="1.6"/>
<path d="M540.0 316.1 L554.0 340.3" class="tr" stroke-width="3.2"/>
<path d="M584.6 340.3 L598.6 321.1" class="tr" stroke-width="3.2"/>
<path d="M565.5 270.2 L578.2 275.3 L580.8 323.7 L575.7 332.6" class="tr" stroke-width="1.6"/>
<path d="M554.0 294.4 L573.1 331.3" class="tr" stroke-width="1.6"/>
<path d="M540.0 402.7 L566.8 354.8" class="tr" stroke-width="1.6"/>
<path d="M554.0 410.1 L591.0 356.8" class="tr" stroke-width="1.6"/>
<path d="M571.8 378.5 L591.0 377.2" class="tr" stroke-width="1.6"/>
<path d="M72.5 468.8 L81.0 419.0" class="tr" stroke-width="1.6"/>
<path d="M72.5 469.7 L100.9 474.9 L125.4 471.9 L140.7 448.9 L159.0 415.3" class="tr" stroke-width="1.6"/>
<path d="M88.7 400.0 L91.7 433.6 L104.0 442.8 L131.5 439.8" class="tr" stroke-width="1.6"/>
<path d="M111.6 539.1 L134.6 461.2 L151.4 400.0" class="tr" stroke-width="1.6"/>
<path d="M151.4 400.0 L151.4 552.9" class="tr" stroke-width="1.6"/>
<path d="M157.5 432.1 L162.1 461.2 L165.1 513.1 L157.5 539.1" class="tr" stroke-width="1.6"/>
<path d="M178.9 543.7 L200.0 519.3" class="tr" stroke-width="3.2"/>
<path d="M157.5 416.8 L178.9 400.0" class="tr" stroke-width="1.6"/>
<path d="M126.9 464.2 L134.6 400.0" class="tr" stroke-width="1.6"/>
<path d="M179.1 543.7 L270.8 437.3 L278.4 400.0" class="tr" stroke-width="3.2"/>
<path d="M283.0 400.0 L275.4 433.6 L270.8 467.3" class="tr" stroke-width="1.6"/>
<path d="M270.8 483.2 L350.0 497.9" class="tr" stroke-width="1.6"/>
<path d="M270.8 498.5 L350.0 513.1" class="tr" stroke-width="1.6"/>
<path d="M270.8 513.8 L294.6 530.0 L350.0 525.4" class="tr" stroke-width="1.6"/>
<path d="M270.8 529.1 L294.6 543.7 L350.0 539.1" class="tr" stroke-width="1.6"/>
<path d="M270.8 544.3 L294.6 551.4 L350.0 554.4" class="tr" stroke-width="1.6"/>
<path d="M157.6 432.1 L162.2 461.2 L163.8 516.2 L156.1 537.6" class="tr" stroke-width="1.6"/>
<path d="M386.2 452.6 L352.6 493.3" class="tr" stroke-width="3.2"/>
<path d="M386.2 452.6 L380.1 464.2 L381.6 485.6 L392.3 493.3" class="tr" stroke-width="3.2"/>
<path d="M270.0 483.2 L386.2 497.9" class="tr" stroke-width="1.6"/>
<path d="M270.0 498.5 L335.7 504.9 L386.2 505.5" class="tr" stroke-width="1.6"/>
<path d="M294.5 528.4 L386.2 525.4" class="tr" stroke-width="1.6"/>
<path d="M294.5 543.7 L386.2 534.6" class="tr" stroke-width="1.6"/>
<path d="M294.5 552.9 L386.2 559.0" class="tr" stroke-width="1.6"/>
<path d="M392.3 493.3 L398.4 516.2 L410.7 528.4" class="tr" stroke-width="1.6"/>
<path d="M410.7 559.0 L470.0 479.5" class="tr" stroke-width="3.2"/>
<path d="M410.7 559.0 L396.9 539.1" class="tr" stroke-width="3.2"/>
<path d="M370.9 400.0 L390.8 413.8 L400.0 405.5" class="tr" stroke-width="1.6"/>
<path d="M435.1 404.6 L419.8 528.4 L410.7 543.7" class="tr" stroke-width="1.6"/>
<path d="M435.1 404.6 L470.0 452.0" class="tr" stroke-width="1.6"/>
<path d="M400.0 546.8 L410.7 558.4 L490.8 453.5" class="tr" stroke-width="3.2"/>
<path d="M502.4 453.5 L510.1 473.4 L516.2 540.7 L526.9 558.4 L594.8 467.3" class="tr" stroke-width="3.2"/>
<path d="M434.6 404.6 L429.1 491.7 L418.3 528.4" class="tr" stroke-width="1.6"/>
<path d="M470.3 400.0 L476.5 448.9" class="tr" stroke-width="1.6"/>
<path d="M436.7 400.0 L476.5 450.5" class="tr" stroke-width="1.6"/>
<path d="M491.7 455.0 L487.2 496.3" class="tr" stroke-width="1.6"/>
<path d="M496.3 400.0 L493.3 465.7 L502.4 482.6" class="tr" stroke-width="1.6"/>
<path d="M510.1 400.0 L507.0 430.6 L516.2 445.9 L522.3 467.3" class="tr" stroke-width="1.6"/>
<path d="M552.9 400.0 L526.9 482.6" class="tr" stroke-width="1.6"/>
<path d="M537.6 400.0 L526.9 436.7" class="tr" stroke-width="1.6"/>
<path d="M400.0 406.1 L422.9 413.8 L418.3 427.5 L427.5 476.5 L422.9 528.4" class="tr" stroke-width="1.6"/>
<path d="M622.6 403.1 L625.6 430.6 L628.7 456.6" class="tr" stroke-width="3.0"/>
<path d="M628.7 456.6 L636.3 412.2 L640.9 400.0" class="tr" stroke-width="1.6"/>
<path d="M540.0 540.7 L595.0 466.7" class="tr" stroke-width="3.2"/>
<path d="M645.5 400.0 L682.2 478.0" class="tr" stroke-width="1.6"/>
<path d="M682.2 478.0 L670.0 550.8" class="tr" stroke-width="1.6"/>
<path d="M618.6 497.2 L628.7 461.2" class="tr" stroke-width="1.6"/>
<path d="M540.0 439.8 L555.3 400.0" class="tr" stroke-width="1.6"/>
<path d="M506.2 29.9 L490.0 75.0 L463.7 160.0 L452.0 280.0 L454.8 324.0 L463.7 362.0 L468.8 410.0 L472.0 450.0" class="tr" stroke-width="1.6"/>
<path d="M506.2 45.2 L490.0 90.0 L469.2 160.0 L455.5 280.0 L457.8 324.0 L466.7 362.0 L471.8 410.0 L474.0 450.0" class="tr" stroke-width="1.6"/>
<path d="M506.2 60.5 L490.0 105.0 L474.7 160.0 L459.0 280.0 L460.8 324.0 L469.7 362.0 L474.8 410.0 L476.0 450.0" class="tr" stroke-width="1.6"/>
<path d="M506.2 75.8 L490.0 120.0 L480.2 160.0 L462.5 280.0 L463.8 324.0 L472.7 362.0 L477.8 410.0 L478.0 450.0" class="tr" stroke-width="1.6"/>
<path d="M625.4 184.1 L612.0 205.0 L600.0 290.0 L597.0 400.0 L599.0 430.0 L607.0 513.1 L618.6 543.1" class="tr" stroke-width="1.6"/>
<path d="M625.4 199.4 L615.0 220.3 L603.0 290.0 L600.0 400.0 L602.0 430.0 L609.0 497.8 L618.6 527.8" class="tr" stroke-width="1.6"/>
<path d="M625.4 214.7 L618.0 235.6 L606.0 290.0 L603.0 400.0 L605.0 430.0 L611.0 482.5 L618.6 512.5" class="tr" stroke-width="1.6"/>
<path d="M625.4 230.0 L621.0 250.9 L609.0 290.0 L606.0 400.0 L608.0 430.0 L613.0 467.2 L618.6 497.2" class="tr" stroke-width="1.6"/>
<path d="M625.4 245.3 L624.0 266.2 L612.0 290.0 L609.0 400.0 L611.0 430.0 L615.0 451.9 L618.6 481.9" class="tr" stroke-width="1.6"/>
<path d="M651.3 87.7 L651.3 377.2" class="tr" stroke-width="2.2"/>
<path d="M326.6 285.5 L346.4 344.0 L366.8 410.0 L385.7 437.5" class="tr" stroke-width="1.6"/>
<path d="M285.0 311.0 L343.9 410.0 L370.0 440.0 L385.7 452.8" class="tr" stroke-width="1.6"/>
<rect x="10.0" y="18.0" width="77.0" height="189.0" class="b"/>
<rect x="56.0" y="26.0" width="24.0" height="174.0" class="d"/>
<circle cx="67.5" cy="37.5" r="11" fill="#a8291b"/><rect x="65.0" y="35.0" width="5" height="5" fill="#060a10"/>
<circle cx="67.5" cy="187" r="11" fill="#a8291b"/><rect x="65.0" y="184.5" width="5" height="5" fill="#060a10"/>
<rect x="57.6" y="84.4" width="5.6" height="5.6" rx="2.2" class="p"/>
<rect x="57.6" y="101.5" width="5.6" height="5.6" rx="2.2" class="p"/>
<rect x="57.6" y="117.5" width="5.6" height="5.6" rx="2.2" class="p"/>
<rect x="57.6" y="134.1" width="5.6" height="5.6" rx="2.2" class="p"/>
<rect x="72.4" y="76.5" width="5.6" height="5.6" rx="2.2" class="p"/>
<rect x="72.4" y="93.1" width="5.6" height="5.6" rx="2.2" class="p"/>
<rect x="72.4" y="109.9" width="5.6" height="5.6" rx="2.2" class="p"/>
<rect x="72.4" y="126.4" width="5.6" height="5.6" rx="2.2" class="p"/>
<rect x="72.4" y="142.7" width="5.6" height="5.6" rx="1" class="p"/>
<rect x="10.0" y="219.5" width="77.0" height="188.5" class="b"/>
<rect x="56.0" y="226.6" width="24.0" height="174.4" class="d"/>
<circle cx="67.5" cy="238.6" r="11" fill="#a8291b"/><rect x="65.0" y="236.1" width="5" height="5" fill="#060a10"/>
<circle cx="67.5" cy="388.5" r="11" fill="#a8291b"/><rect x="65.0" y="386.0" width="5" height="5" fill="#060a10"/>
<rect x="57.6" y="285.4" width="5.6" height="5.6" rx="2.2" class="p"/>
<rect x="57.6" y="302.6" width="5.6" height="5.6" rx="2.2" class="p"/>
<rect x="57.6" y="318.6" width="5.6" height="5.6" rx="2.2" class="p"/>
<rect x="57.6" y="335.4" width="5.6" height="5.6" rx="2.2" class="p"/>
<rect x="72.4" y="277.6" width="5.6" height="5.6" rx="2.2" class="p"/>
<rect x="72.4" y="294.3" width="5.6" height="5.6" rx="2.2" class="p"/>
<rect x="72.4" y="310.8" width="5.6" height="5.6" rx="2.2" class="p"/>
<rect x="72.4" y="327.6" width="5.6" height="5.6" rx="2.2" class="p"/>
<rect x="72.4" y="344.3" width="5.6" height="5.6" rx="1" class="p"/>
<rect x="107.8" y="22.0" width="30.5" height="106.5" class="b"/>
<rect x="95.5" y="25.8" width="54.3" height="100.1" class="d"/>
<rect x="96.5" y="26.2" width="6.9" height="6.9" rx="1" class="p"/>
<rect x="96.5" y="41.5" width="6.9" height="6.9" rx="2.2" class="p"/>
<rect x="96.5" y="56.8" width="6.9" height="6.9" rx="2.2" class="p"/>
<rect x="96.5" y="72.0" width="6.9" height="6.9" rx="2.2" class="p"/>
<rect x="96.5" y="87.4" width="6.9" height="6.9" rx="2.2" class="p"/>
<rect x="96.5" y="102.6" width="6.9" height="6.9" rx="2.2" class="p"/>
<rect x="96.5" y="118.0" width="6.9" height="6.9" rx="2.2" class="p"/>
<rect x="142.2" y="26.2" width="6.9" height="6.9" rx="2.2" class="p"/>
<rect x="142.2" y="41.5" width="6.9" height="6.9" rx="2.2" class="p"/>
<rect x="142.2" y="56.8" width="6.9" height="6.9" rx="2.2" class="p"/>
<rect x="142.2" y="72.0" width="6.9" height="6.9" rx="2.2" class="p"/>
<rect x="142.2" y="87.4" width="6.9" height="6.9" rx="2.2" class="p"/>
<rect x="142.2" y="102.6" width="6.9" height="6.9" rx="2.2" class="p"/>
<rect x="142.2" y="118.0" width="6.9" height="6.9" rx="2.2" class="p"/>
<rect x="165.0" y="24.0" width="33.0" height="122.0" class="b"/>
<rect x="154.6" y="28.3" width="54.5" height="114.7" class="d"/>
<rect x="155.2" y="28.9" width="6.9" height="6.9" rx="1" class="p"/>
<rect x="155.2" y="44.2" width="6.9" height="6.9" rx="2.2" class="p"/>
<rect x="155.2" y="59.5" width="6.9" height="6.9" rx="2.2" class="p"/>
<rect x="155.2" y="74.9" width="6.9" height="6.9" rx="2.2" class="p"/>
<rect x="155.2" y="90.1" width="6.9" height="6.9" rx="2.2" class="p"/>
<rect x="155.2" y="105.5" width="6.9" height="6.9" rx="2.2" class="p"/>
<rect x="155.2" y="120.8" width="6.9" height="6.9" rx="2.2" class="p"/>
<rect x="155.2" y="136.1" width="6.9" height="6.9" rx="2.2" class="p"/>
<rect x="200.9" y="28.9" width="6.9" height="6.9" rx="2.2" class="p"/>
<rect x="200.9" y="44.2" width="6.9" height="6.9" rx="2.2" class="p"/>
<rect x="200.9" y="59.5" width="6.9" height="6.9" rx="2.2" class="p"/>
<rect x="200.9" y="74.9" width="6.9" height="6.9" rx="2.2" class="p"/>
<rect x="200.9" y="90.1" width="6.9" height="6.9" rx="2.2" class="p"/>
<rect x="200.9" y="105.5" width="6.9" height="6.9" rx="2.2" class="p"/>
<rect x="200.9" y="120.8" width="6.9" height="6.9" rx="2.2" class="p"/>
<rect x="200.9" y="136.1" width="6.9" height="6.9" rx="2.2" class="p"/>
<rect x="232.0" y="24.0" width="30.0" height="124.0" class="b"/>
<rect x="219.3" y="29.1" width="54.3" height="114.7" class="d"/>
<rect x="220.0" y="29.4" width="6.9" height="6.9" rx="1" class="p"/>
<rect x="220.0" y="44.8" width="6.9" height="6.9" rx="2.2" class="p"/>
<rect x="220.0" y="60.0" width="6.9" height="6.9" rx="2.2" class="p"/>
<rect x="220.0" y="75.4" width="6.9" height="6.9" rx="2.2" class="p"/>
<rect x="220.0" y="90.6" width="6.9" height="6.9" rx="2.2" class="p"/>
<rect x="220.0" y="106.0" width="6.9" height="6.9" rx="2.2" class="p"/>
<rect x="220.0" y="121.3" width="6.9" height="6.9" rx="2.2" class="p"/>
<rect x="220.0" y="136.6" width="6.9" height="6.9" rx="2.2" class="p"/>
<rect x="265.6" y="29.4" width="6.9" height="6.9" rx="2.2" class="p"/>
<rect x="265.6" y="44.8" width="6.9" height="6.9" rx="2.2" class="p"/>
<rect x="265.6" y="60.0" width="6.9" height="6.9" rx="2.2" class="p"/>
<rect x="265.6" y="75.4" width="6.9" height="6.9" rx="2.2" class="p"/>
<rect x="265.6" y="90.6" width="6.9" height="6.9" rx="2.2" class="p"/>
<rect x="265.6" y="106.0" width="6.9" height="6.9" rx="2.2" class="p"/>
<rect x="265.6" y="121.3" width="6.9" height="6.9" rx="2.2" class="p"/>
<rect x="265.6" y="136.6" width="6.9" height="6.9" rx="2.2" class="p"/>
<rect x="298.0" y="22.0" width="77.0" height="308.0" class="b"/>
<rect x="286.7" y="27.8" width="99.2" height="297.2" class="d"/>
<rect x="287.4" y="28.2" width="6.9" height="6.9" rx="1" class="p"/>
<rect x="287.4" y="43.5" width="6.9" height="6.9" rx="2.2" class="p"/>
<rect x="287.4" y="58.8" width="6.9" height="6.9" rx="2.2" class="p"/>
<rect x="287.4" y="74.2" width="6.9" height="6.9" rx="2.2" class="p"/>
<rect x="287.4" y="89.5" width="6.9" height="6.9" rx="2.2" class="p"/>
<rect x="287.4" y="104.8" width="6.9" height="6.9" rx="2.2" class="p"/>
<rect x="287.4" y="120.1" width="6.9" height="6.9" rx="2.2" class="p"/>
<rect x="287.4" y="135.4" width="6.9" height="6.9" rx="2.2" class="p"/>
<rect x="287.4" y="150.7" width="6.9" height="6.9" rx="2.2" class="p"/>
<rect x="287.4" y="166.0" width="6.9" height="6.9" rx="2.2" class="p"/>
<rect x="287.4" y="181.2" width="6.9" height="6.9" rx="2.2" class="p"/>
<rect x="287.4" y="196.6" width="6.9" height="6.9" rx="2.2" class="p"/>
<rect x="287.4" y="211.9" width="6.9" height="6.9" rx="2.2" class="p"/>
<rect x="287.4" y="227.2" width="6.9" height="6.9" rx="2.2" class="p"/>
<rect x="287.4" y="242.5" width="6.9" height="6.9" rx="2.2" class="p"/>
<rect x="287.4" y="257.8" width="6.9" height="6.9" rx="2.2" class="p"/>
<rect x="287.4" y="273.1" width="6.9" height="6.9" rx="2.2" class="p"/>
<rect x="287.4" y="288.4" width="6.9" height="6.9" rx="2.2" class="p"/>
<rect x="287.4" y="303.7" width="6.9" height="6.9" rx="2.2" class="p"/>
<rect x="287.4" y="318.9" width="6.9" height="6.9" rx="2.2" class="p"/>
<rect x="378.7" y="28.2" width="6.9" height="6.9" rx="2.2" class="p"/>
<rect x="378.7" y="43.5" width="6.9" height="6.9" rx="2.2" class="p"/>
<rect x="378.7" y="58.8" width="6.9" height="6.9" rx="2.2" class="p"/>
<rect x="378.7" y="74.2" width="6.9" height="6.9" rx="2.2" class="p"/>
<rect x="378.7" y="89.5" width="6.9" height="6.9" rx="2.2" class="p"/>
<rect x="378.7" y="104.8" width="6.9" height="6.9" rx="2.2" class="p"/>
<rect x="378.7" y="120.1" width="6.9" height="6.9" rx="2.2" class="p"/>
<rect x="378.7" y="135.4" width="6.9" height="6.9" rx="2.2" class="p"/>
<rect x="378.7" y="150.7" width="6.9" height="6.9" rx="2.2" class="p"/>
<rect x="378.7" y="166.0" width="6.9" height="6.9" rx="2.2" class="p"/>
<rect x="378.7" y="181.2" width="6.9" height="6.9" rx="2.2" class="p"/>
<rect x="378.7" y="196.6" width="6.9" height="6.9" rx="2.2" class="p"/>
<rect x="378.7" y="211.9" width="6.9" height="6.9" rx="2.2" class="p"/>
<rect x="378.7" y="227.2" width="6.9" height="6.9" rx="2.2" class="p"/>
<rect x="378.7" y="242.5" width="6.9" height="6.9" rx="2.2" class="p"/>
<rect x="378.7" y="257.8" width="6.9" height="6.9" rx="2.2" class="p"/>
<rect x="378.7" y="273.1" width="6.9" height="6.9" rx="2.2" class="p"/>
<rect x="378.7" y="288.4" width="6.9" height="6.9" rx="2.2" class="p"/>
<rect x="378.7" y="303.7" width="6.9" height="6.9" rx="2.2" class="p"/>
<rect x="378.7" y="318.9" width="6.9" height="6.9" rx="2.2" class="p"/>
<rect x="422.0" y="22.0" width="78.0" height="306.0" class="b"/>
<rect x="410.7" y="27.0" width="99.3" height="296.7" class="d"/>
<rect x="411.2" y="26.4" width="6.9" height="6.9" rx="1" class="p"/>
<rect x="411.2" y="41.8" width="6.9" height="6.9" rx="2.2" class="p"/>
<rect x="411.2" y="57.0" width="6.9" height="6.9" rx="2.2" class="p"/>
<rect x="411.2" y="72.4" width="6.9" height="6.9" rx="2.2" class="p"/>
<rect x="411.2" y="87.6" width="6.9" height="6.9" rx="2.2" class="p"/>
<rect x="411.2" y="103.0" width="6.9" height="6.9" rx="2.2" class="p"/>
<rect x="411.2" y="118.3" width="6.9" height="6.9" rx="2.2" class="p"/>
<rect x="411.2" y="133.6" width="6.9" height="6.9" rx="2.2" class="p"/>
<rect x="411.2" y="148.9" width="6.9" height="6.9" rx="2.2" class="p"/>
<rect x="411.2" y="164.2" width="6.9" height="6.9" rx="2.2" class="p"/>
<rect x="411.2" y="179.5" width="6.9" height="6.9" rx="2.2" class="p"/>
<rect x="411.2" y="194.8" width="6.9" height="6.9" rx="2.2" class="p"/>
<rect x="411.2" y="210.1" width="6.9" height="6.9" rx="2.2" class="p"/>
<rect x="411.2" y="225.4" width="6.9" height="6.9" rx="2.2" class="p"/>
<rect x="411.2" y="240.7" width="6.9" height="6.9" rx="2.2" class="p"/>
<rect x="411.2" y="255.9" width="6.9" height="6.9" rx="2.2" class="p"/>
<rect x="411.2" y="271.2" width="6.9" height="6.9" rx="2.2" class="p"/>
<rect x="411.2" y="286.6" width="6.9" height="6.9" rx="2.2" class="p"/>
<rect x="411.2" y="301.9" width="6.9" height="6.9" rx="2.2" class="p"/>
<rect x="411.2" y="317.1" width="6.9" height="6.9" rx="2.2" class="p"/>
<rect x="502.8" y="26.4" width="6.9" height="6.9" rx="2.2" class="p"/>
<rect x="502.8" y="41.8" width="6.9" height="6.9" rx="2.2" class="p"/>
<rect x="502.8" y="57.0" width="6.9" height="6.9" rx="2.2" class="p"/>
<rect x="502.8" y="72.4" width="6.9" height="6.9" rx="2.2" class="p"/>
<rect x="502.8" y="87.6" width="6.9" height="6.9" rx="2.2" class="p"/>
<rect x="502.8" y="103.0" width="6.9" height="6.9" rx="2.2" class="p"/>
<rect x="502.8" y="118.3" width="6.9" height="6.9" rx="2.2" class="p"/>
<rect x="502.8" y="133.6" width="6.9" height="6.9" rx="2.2" class="p"/>
<rect x="502.8" y="148.9" width="6.9" height="6.9" rx="2.2" class="p"/>
<rect x="502.8" y="164.2" width="6.9" height="6.9" rx="2.2" class="p"/>
<rect x="502.8" y="179.5" width="6.9" height="6.9" rx="2.2" class="p"/>
<rect x="502.8" y="194.8" width="6.9" height="6.9" rx="2.2" class="p"/>
<rect x="502.8" y="210.1" width="6.9" height="6.9" rx="2.2" class="p"/>
<rect x="502.8" y="225.4" width="6.9" height="6.9" rx="2.2" class="p"/>
<rect x="502.8" y="240.7" width="6.9" height="6.9" rx="2.2" class="p"/>
<rect x="502.8" y="255.9" width="6.9" height="6.9" rx="2.2" class="p"/>
<rect x="502.8" y="271.2" width="6.9" height="6.9" rx="2.2" class="p"/>
<rect x="502.8" y="286.6" width="6.9" height="6.9" rx="2.2" class="p"/>
<rect x="502.8" y="301.9" width="6.9" height="6.9" rx="2.2" class="p"/>
<rect x="502.8" y="317.1" width="6.9" height="6.9" rx="2.2" class="p"/>
<rect x="541.0" y="22.0" width="78.0" height="308.0" class="b"/>
<rect x="529.9" y="27.8" width="99.3" height="297.2" class="d"/>
<rect x="530.3" y="27.7" width="6.9" height="6.9" rx="1" class="p"/>
<rect x="530.3" y="43.0" width="6.9" height="6.9" rx="2.2" class="p"/>
<rect x="530.3" y="58.2" width="6.9" height="6.9" rx="2.2" class="p"/>
<rect x="530.3" y="73.5" width="6.9" height="6.9" rx="2.2" class="p"/>
<rect x="530.3" y="88.9" width="6.9" height="6.9" rx="2.2" class="p"/>
<rect x="530.3" y="104.1" width="6.9" height="6.9" rx="2.2" class="p"/>
<rect x="530.3" y="119.5" width="6.9" height="6.9" rx="2.2" class="p"/>
<rect x="530.3" y="134.8" width="6.9" height="6.9" rx="2.2" class="p"/>
<rect x="530.3" y="150.1" width="6.9" height="6.9" rx="2.2" class="p"/>
<rect x="530.3" y="165.4" width="6.9" height="6.9" rx="2.2" class="p"/>
<rect x="530.3" y="180.7" width="6.9" height="6.9" rx="2.2" class="p"/>
<rect x="530.3" y="196.0" width="6.9" height="6.9" rx="2.2" class="p"/>
<rect x="530.3" y="211.3" width="6.9" height="6.9" rx="2.2" class="p"/>
<rect x="530.3" y="226.6" width="6.9" height="6.9" rx="2.2" class="p"/>
<rect x="530.3" y="241.9" width="6.9" height="6.9" rx="2.2" class="p"/>
<rect x="530.3" y="257.2" width="6.9" height="6.9" rx="2.2" class="p"/>
<rect x="530.3" y="272.5" width="6.9" height="6.9" rx="2.2" class="p"/>
<rect x="530.3" y="287.8" width="6.9" height="6.9" rx="2.2" class="p"/>
<rect x="530.3" y="303.1" width="6.9" height="6.9" rx="2.2" class="p"/>
<rect x="530.3" y="318.4" width="6.9" height="6.9" rx="2.2" class="p"/>
<rect x="621.9" y="27.7" width="6.9" height="6.9" rx="2.2" class="p"/>
<rect x="621.9" y="43.0" width="6.9" height="6.9" rx="2.2" class="p"/>
<rect x="621.9" y="58.2" width="6.9" height="6.9" rx="2.2" class="p"/>
<rect x="621.9" y="73.5" width="6.9" height="6.9" rx="2.2" class="p"/>
<rect x="621.9" y="88.9" width="6.9" height="6.9" rx="2.2" class="p"/>
<rect x="621.9" y="104.1" width="6.9" height="6.9" rx="2.2" class="p"/>
<rect x="621.9" y="119.5" width="6.9" height="6.9" rx="2.2" class="p"/>
<rect x="621.9" y="134.8" width="6.9" height="6.9" rx="2.2" class="p"/>
<rect x="621.9" y="150.1" width="6.9" height="6.9" rx="2.2" class="p"/>
<rect x="621.9" y="165.4" width="6.9" height="6.9" rx="2.2" class="p"/>
<rect x="621.9" y="180.7" width="6.9" height="6.9" rx="2.2" class="p"/>
<rect x="621.9" y="196.0" width="6.9" height="6.9" rx="2.2" class="p"/>
<rect x="621.9" y="211.3" width="6.9" height="6.9" rx="2.2" class="p"/>
<rect x="621.9" y="226.6" width="6.9" height="6.9" rx="2.2" class="p"/>
<rect x="621.9" y="241.9" width="6.9" height="6.9" rx="2.2" class="p"/>
<rect x="621.9" y="257.2" width="6.9" height="6.9" rx="2.2" class="p"/>
<rect x="621.9" y="272.5" width="6.9" height="6.9" rx="2.2" class="p"/>
<rect x="621.9" y="287.8" width="6.9" height="6.9" rx="2.2" class="p"/>
<rect x="621.9" y="303.1" width="6.9" height="6.9" rx="2.2" class="p"/>
<rect x="621.9" y="318.4" width="6.9" height="6.9" rx="2.2" class="p"/>
<rect x="644.0" y="80.0" width="77.0" height="366.0" class="b"/>
<rect x="647.5" y="49.5" width="24.1" height="365.2" class="d"/>
<circle cx="661.8" cy="57.1" r="7" fill="#a8291b"/><rect x="659.8" y="55.1" width="4" height="4" fill="#060a10"/>
<circle cx="661.8" cy="407.2" r="7" fill="#a8291b"/><rect x="659.8" y="405.2" width="4" height="4" fill="#060a10"/>
<rect x="647.8" y="84.2" width="6.9" height="6.9" rx="1" class="p"/>
<rect x="647.8" y="99.5" width="6.9" height="6.9" rx="2.2" class="p"/>
<rect x="647.8" y="114.7" width="6.9" height="6.9" rx="2.2" class="p"/>
<rect x="647.8" y="130.0" width="6.9" height="6.9" rx="2.2" class="p"/>
<rect x="647.8" y="145.2" width="6.9" height="6.9" rx="2.2" class="p"/>
<rect x="647.8" y="160.5" width="6.9" height="6.9" rx="2.2" class="p"/>
<rect x="647.8" y="175.7" width="6.9" height="6.9" rx="2.2" class="p"/>
<rect x="647.8" y="190.9" width="6.9" height="6.9" rx="2.2" class="p"/>
<rect x="647.8" y="206.2" width="6.9" height="6.9" rx="2.2" class="p"/>
<rect x="647.8" y="221.4" width="6.9" height="6.9" rx="2.2" class="p"/>
<rect x="647.8" y="236.7" width="6.9" height="6.9" rx="2.2" class="p"/>
<rect x="647.8" y="251.9" width="6.9" height="6.9" rx="2.2" class="p"/>
<rect x="647.8" y="267.1" width="6.9" height="6.9" rx="2.2" class="p"/>
<rect x="647.8" y="282.4" width="6.9" height="6.9" rx="2.2" class="p"/>
<rect x="647.8" y="297.6" width="6.9" height="6.9" rx="2.2" class="p"/>
<rect x="647.8" y="312.9" width="6.9" height="6.9" rx="2.2" class="p"/>
<rect x="647.8" y="328.1" width="6.9" height="6.9" rx="2.2" class="p"/>
<rect x="647.8" y="343.3" width="6.9" height="6.9" rx="2.2" class="p"/>
<rect x="647.8" y="358.6" width="6.9" height="6.9" rx="2.2" class="p"/>
<rect x="647.8" y="373.8" width="6.9" height="6.9" rx="2.2" class="p"/>
<rect x="663.1" y="84.2" width="6.9" height="6.9" rx="2.2" class="p"/>
<rect x="663.1" y="99.5" width="6.9" height="6.9" rx="2.2" class="p"/>
<rect x="663.1" y="114.7" width="6.9" height="6.9" rx="2.2" class="p"/>
<rect x="663.1" y="130.0" width="6.9" height="6.9" rx="2.2" class="p"/>
<rect x="663.1" y="145.2" width="6.9" height="6.9" rx="2.2" class="p"/>
<rect x="663.1" y="160.5" width="6.9" height="6.9" rx="2.2" class="p"/>
<rect x="663.1" y="175.7" width="6.9" height="6.9" rx="2.2" class="p"/>
<rect x="663.1" y="190.9" width="6.9" height="6.9" rx="2.2" class="p"/>
<rect x="663.1" y="206.2" width="6.9" height="6.9" rx="2.2" class="p"/>
<rect x="663.1" y="221.4" width="6.9" height="6.9" rx="2.2" class="p"/>
<rect x="663.1" y="236.7" width="6.9" height="6.9" rx="2.2" class="p"/>
<rect x="663.1" y="251.9" width="6.9" height="6.9" rx="2.2" class="p"/>
<rect x="663.1" y="267.1" width="6.9" height="6.9" rx="2.2" class="p"/>
<rect x="663.1" y="282.4" width="6.9" height="6.9" rx="2.2" class="p"/>
<rect x="663.1" y="297.6" width="6.9" height="6.9" rx="2.2" class="p"/>
<rect x="663.1" y="312.9" width="6.9" height="6.9" rx="2.2" class="p"/>
<rect x="663.1" y="328.1" width="6.9" height="6.9" rx="2.2" class="p"/>
<rect x="663.1" y="343.3" width="6.9" height="6.9" rx="2.2" class="p"/>
<rect x="663.1" y="358.6" width="6.9" height="6.9" rx="2.2" class="p"/>
<rect x="663.1" y="373.8" width="6.9" height="6.9" rx="2.2" class="p"/>
<rect x="113.0" y="176.0" width="31.0" height="107.0" class="b"/>
<rect x="101.9" y="180.0" width="53.5" height="99.6" class="d"/>
<rect x="102.2" y="180.7" width="6.9" height="6.9" rx="1" class="p"/>
<rect x="102.2" y="196.0" width="6.9" height="6.9" rx="2.2" class="p"/>
<rect x="102.2" y="211.2" width="6.9" height="6.9" rx="2.2" class="p"/>
<rect x="102.2" y="226.6" width="6.9" height="6.9" rx="2.2" class="p"/>
<rect x="102.2" y="241.9" width="6.9" height="6.9" rx="2.2" class="p"/>
<rect x="102.2" y="257.2" width="6.9" height="6.9" rx="2.2" class="p"/>
<rect x="102.2" y="272.4" width="6.9" height="6.9" rx="2.2" class="p"/>
<rect x="148.2" y="180.7" width="6.9" height="6.9" rx="2.2" class="p"/>
<rect x="148.2" y="196.0" width="6.9" height="6.9" rx="2.2" class="p"/>
<rect x="148.2" y="211.2" width="6.9" height="6.9" rx="2.2" class="p"/>
<rect x="148.2" y="226.6" width="6.9" height="6.9" rx="2.2" class="p"/>
<rect x="148.2" y="241.9" width="6.9" height="6.9" rx="2.2" class="p"/>
<rect x="148.2" y="257.2" width="6.9" height="6.9" rx="2.2" class="p"/>
<rect x="148.2" y="272.4" width="6.9" height="6.9" rx="2.2" class="p"/>
<circle cx="188" cy="239.4" r="30.6" class="b"/>
<rect x="183.2" y="219.7" width="10.4" height="40.6" class="d"/>
<rect x="183.8" y="220.6" width="8.4" height="8.4" rx="1" class="p"/>
<rect x="183.8" y="251.0" width="8.4" height="8.4" rx="2.2" class="p"/>
<rect x="219.3" y="158.0" width="54.3" height="23.0" class="b"/>
<rect x="225.7" y="164.9" width="41.0" height="11.0" class="d"/>
<rect x="226.8" y="165.8" width="8.4" height="8.4" rx="1" class="p"/>
<rect x="257.1" y="165.8" width="8.4" height="8.4" rx="2.2" class="p"/>
<rect x="232.0" y="186.0" width="30.0" height="123.0" class="b"/>
<rect x="221.3" y="190.6" width="53.5" height="114.8" class="d"/>
<rect x="221.2" y="191.6" width="6.9" height="6.9" rx="1" class="p"/>
<rect x="221.2" y="206.7" width="6.9" height="6.9" rx="2.2" class="p"/>
<rect x="221.2" y="221.8" width="6.9" height="6.9" rx="2.2" class="p"/>
<rect x="221.2" y="236.9" width="6.9" height="6.9" rx="2.2" class="p"/>
<rect x="221.2" y="252.0" width="6.9" height="6.9" rx="2.2" class="p"/>
<rect x="221.2" y="267.1" width="6.9" height="6.9" rx="2.2" class="p"/>
<rect x="221.2" y="282.2" width="6.9" height="6.9" rx="2.2" class="p"/>
<rect x="221.2" y="297.2" width="6.9" height="6.9" rx="2.2" class="p"/>
<rect x="267.1" y="191.6" width="6.9" height="6.9" rx="2.2" class="p"/>
<rect x="267.1" y="206.7" width="6.9" height="6.9" rx="2.2" class="p"/>
<rect x="267.1" y="221.8" width="6.9" height="6.9" rx="2.2" class="p"/>
<rect x="267.1" y="236.9" width="6.9" height="6.9" rx="2.2" class="p"/>
<rect x="267.1" y="252.0" width="6.9" height="6.9" rx="2.2" class="p"/>
<rect x="267.1" y="267.1" width="6.9" height="6.9" rx="2.2" class="p"/>
<rect x="267.1" y="282.2" width="6.9" height="6.9" rx="2.2" class="p"/>
<rect x="267.1" y="297.2" width="6.9" height="6.9" rx="2.2" class="p"/>
<rect x="103.5" y="285.3" width="54.0" height="22.9" class="b"/>
<rect x="109.6" y="291.7" width="40.7" height="10.1" class="d"/>
<rect x="111.0" y="292.0" width="8.4" height="8.4" rx="1" class="p"/>
<rect x="141.0" y="292.0" width="8.4" height="8.4" rx="2.2" class="p"/>
<rect x="103.5" y="315.9" width="54.0" height="22.9" class="b"/>
<rect x="109.6" y="322.2" width="40.7" height="10.2" class="d"/>
<rect x="111.0" y="322.6" width="8.4" height="8.4" rx="1" class="p"/>
<rect x="141.0" y="322.6" width="8.4" height="8.4" rx="2.2" class="p"/>
<rect x="91.6" y="342.9" width="72.2" height="10.0" class="d"/>
<rect x="92.3" y="343.7" width="8.4" height="8.4" rx="1" class="p"/>
<rect x="153.3" y="343.7" width="8.4" height="8.4" rx="2.2" class="p"/>
<rect x="91.6" y="361.7" width="72.2" height="10.0" class="d"/>
<rect x="92.3" y="362.5" width="8.4" height="8.4" rx="1" class="p"/>
<rect x="153.3" y="362.5" width="8.4" height="8.4" rx="2.2" class="p"/>
<rect x="91.6" y="381.4" width="72.2" height="10.0" class="d"/>
<rect x="92.3" y="382.2" width="8.4" height="8.4" rx="1" class="p"/>
<rect x="153.3" y="382.2" width="8.4" height="8.4" rx="2.2" class="p"/>
<rect x="91.6" y="396.4" width="72.2" height="10.0" class="d"/>
<rect x="92.3" y="397.2" width="8.4" height="8.4" rx="1" class="p"/>
<rect x="153.3" y="397.2" width="8.4" height="8.4" rx="2.2" class="p"/>
<rect x="91.6" y="411.4" width="72.2" height="10.0" class="d"/>
<rect x="92.3" y="412.2" width="8.4" height="8.4" rx="1" class="p"/>
<rect x="153.3" y="412.2" width="8.4" height="8.4" rx="2.2" class="p"/>
<rect x="91.6" y="426.7" width="72.2" height="10.0" class="d"/>
<rect x="92.3" y="427.5" width="8.4" height="8.4" rx="1" class="p"/>
<rect x="153.3" y="427.5" width="8.4" height="8.4" rx="2.2" class="p"/>
<rect x="174.2" y="311.0" width="53.5" height="23.4" class="b"/>
<rect x="180.6" y="317.3" width="40.7" height="11.0" class="d"/>
<rect x="181.0" y="318.2" width="8.4" height="8.4" rx="1" class="p"/>
<rect x="212.0" y="318.2" width="8.4" height="8.4" rx="2.2" class="p"/>
<rect x="186.0" y="338.0" width="76.0" height="214.0" class="b"/>
<rect x="174.8" y="342.0" width="100.4" height="206.3" class="d"/>
<rect x="175.5" y="342.4" width="6.9" height="6.9" rx="1" class="p"/>
<rect x="175.5" y="357.8" width="6.9" height="6.9" rx="2.2" class="p"/>
<rect x="175.5" y="373.1" width="6.9" height="6.9" rx="2.2" class="p"/>
<rect x="175.5" y="388.3" width="6.9" height="6.9" rx="2.2" class="p"/>
<rect x="175.5" y="403.6" width="6.9" height="6.9" rx="2.2" class="p"/>
<rect x="175.5" y="418.9" width="6.9" height="6.9" rx="2.2" class="p"/>
<rect x="175.5" y="434.2" width="6.9" height="6.9" rx="2.2" class="p"/>
<rect x="175.5" y="449.6" width="6.9" height="6.9" rx="2.2" class="p"/>
<rect x="175.5" y="464.8" width="6.9" height="6.9" rx="2.2" class="p"/>
<rect x="175.5" y="480.2" width="6.9" height="6.9" rx="2.2" class="p"/>
<rect x="175.5" y="495.4" width="6.9" height="6.9" rx="2.2" class="p"/>
<rect x="175.5" y="510.8" width="6.9" height="6.9" rx="2.2" class="p"/>
<rect x="175.5" y="526.0" width="6.9" height="6.9" rx="2.2" class="p"/>
<rect x="175.5" y="541.3" width="6.9" height="6.9" rx="2.2" class="p"/>
<rect x="267.2" y="342.4" width="6.9" height="6.9" rx="2.2" class="p"/>
<rect x="267.2" y="357.8" width="6.9" height="6.9" rx="2.2" class="p"/>
<rect x="267.2" y="373.1" width="6.9" height="6.9" rx="2.2" class="p"/>
<rect x="267.2" y="388.3" width="6.9" height="6.9" rx="2.2" class="p"/>
<rect x="267.2" y="403.6" width="6.9" height="6.9" rx="2.2" class="p"/>
<rect x="267.2" y="418.9" width="6.9" height="6.9" rx="2.2" class="p"/>
<rect x="267.2" y="434.2" width="6.9" height="6.9" rx="2.2" class="p"/>
<rect x="267.2" y="449.6" width="6.9" height="6.9" rx="2.2" class="p"/>
<rect x="267.2" y="464.8" width="6.9" height="6.9" rx="2.2" class="p"/>
<rect x="267.2" y="480.2" width="6.9" height="6.9" rx="2.2" class="p"/>
<rect x="267.2" y="495.4" width="6.9" height="6.9" rx="2.2" class="p"/>
<rect x="267.2" y="510.8" width="6.9" height="6.9" rx="2.2" class="p"/>
<rect x="267.2" y="526.0" width="6.9" height="6.9" rx="2.2" class="p"/>
<rect x="267.2" y="541.3" width="6.9" height="6.9" rx="2.2" class="p"/>
<rect x="312.4" y="329.0" width="54.0" height="23.0" class="b"/>
<rect x="318.4" y="335.2" width="42.0" height="10.8" class="d"/>
<rect x="319.3" y="336.3" width="8.4" height="8.4" rx="1" class="p"/>
<rect x="350.6" y="336.3" width="8.4" height="8.4" rx="2.2" class="p"/>
<rect x="427.1" y="329.0" width="52.8" height="23.0" class="b"/>
<rect x="433.1" y="335.2" width="40.8" height="10.8" class="d"/>
<rect x="434.0" y="336.3" width="8.4" height="8.4" rx="1" class="p"/>
<rect x="464.1" y="336.3" width="8.4" height="8.4" rx="2.2" class="p"/>
<rect x="543.0" y="329.0" width="52.8" height="23.0" class="b"/>
<rect x="549.0" y="335.2" width="40.8" height="10.8" class="d"/>
<rect x="549.2" y="336.3" width="8.4" height="8.4" rx="1" class="p"/>
<rect x="580.5" y="336.3" width="8.4" height="8.4" rx="2.2" class="p"/>
<rect x="302.0" y="352.0" width="76.0" height="215.0" class="b"/>
<rect x="290.3" y="356.8" width="99.6" height="206.2" class="d"/>
<rect x="290.9" y="357.6" width="6.9" height="6.9" rx="1" class="p"/>
<rect x="290.9" y="372.9" width="6.9" height="6.9" rx="2.2" class="p"/>
<rect x="290.9" y="388.2" width="6.9" height="6.9" rx="2.2" class="p"/>
<rect x="290.9" y="403.4" width="6.9" height="6.9" rx="2.2" class="p"/>
<rect x="290.9" y="418.8" width="6.9" height="6.9" rx="2.2" class="p"/>
<rect x="290.9" y="434.1" width="6.9" height="6.9" rx="2.2" class="p"/>
<rect x="290.9" y="449.4" width="6.9" height="6.9" rx="2.2" class="p"/>
<rect x="290.9" y="464.7" width="6.9" height="6.9" rx="2.2" class="p"/>
<rect x="290.9" y="479.9" width="6.9" height="6.9" rx="2.2" class="p"/>
<rect x="290.9" y="495.3" width="6.9" height="6.9" rx="2.2" class="p"/>
<rect x="290.9" y="510.6" width="6.9" height="6.9" rx="2.2" class="p"/>
<rect x="290.9" y="525.8" width="6.9" height="6.9" rx="2.2" class="p"/>
<rect x="290.9" y="541.1" width="6.9" height="6.9" rx="2.2" class="p"/>
<rect x="290.9" y="556.4" width="6.9" height="6.9" rx="2.2" class="p"/>
<rect x="382.2" y="357.6" width="6.9" height="6.9" rx="2.2" class="p"/>
<rect x="382.2" y="372.9" width="6.9" height="6.9" rx="2.2" class="p"/>
<rect x="382.2" y="388.2" width="6.9" height="6.9" rx="2.2" class="p"/>
<rect x="382.2" y="403.4" width="6.9" height="6.9" rx="2.2" class="p"/>
<rect x="382.2" y="418.8" width="6.9" height="6.9" rx="2.2" class="p"/>
<rect x="382.2" y="434.1" width="6.9" height="6.9" rx="2.2" class="p"/>
<rect x="382.2" y="449.4" width="6.9" height="6.9" rx="2.2" class="p"/>
<rect x="382.2" y="464.7" width="6.9" height="6.9" rx="2.2" class="p"/>
<rect x="382.2" y="479.9" width="6.9" height="6.9" rx="2.2" class="p"/>
<rect x="382.2" y="495.3" width="6.9" height="6.9" rx="2.2" class="p"/>
<rect x="382.2" y="510.6" width="6.9" height="6.9" rx="2.2" class="p"/>
<rect x="382.2" y="525.8" width="6.9" height="6.9" rx="2.2" class="p"/>
<rect x="382.2" y="541.1" width="6.9" height="6.9" rx="2.2" class="p"/>
<rect x="382.2" y="556.4" width="6.9" height="6.9" rx="2.2" class="p"/>
<rect x="418.0" y="352.0" width="76.0" height="214.0" class="b"/>
<rect x="406.7" y="356.3" width="99.5" height="205.7" class="d"/>
<rect x="407.4" y="357.2" width="6.9" height="6.9" rx="1" class="p"/>
<rect x="407.4" y="372.5" width="6.9" height="6.9" rx="2.2" class="p"/>
<rect x="407.4" y="387.8" width="6.9" height="6.9" rx="2.2" class="p"/>
<rect x="407.4" y="403.1" width="6.9" height="6.9" rx="2.2" class="p"/>
<rect x="407.4" y="418.4" width="6.9" height="6.9" rx="2.2" class="p"/>
<rect x="407.4" y="433.7" width="6.9" height="6.9" rx="2.2" class="p"/>
<rect x="407.4" y="449.0" width="6.9" height="6.9" rx="2.2" class="p"/>
<rect x="407.4" y="464.3" width="6.9" height="6.9" rx="2.2" class="p"/>
<rect x="407.4" y="479.6" width="6.9" height="6.9" rx="2.2" class="p"/>
<rect x="407.4" y="494.9" width="6.9" height="6.9" rx="2.2" class="p"/>
<rect x="407.4" y="510.2" width="6.9" height="6.9" rx="2.2" class="p"/>
<rect x="407.4" y="525.5" width="6.9" height="6.9" rx="2.2" class="p"/>
<rect x="407.4" y="540.8" width="6.9" height="6.9" rx="2.2" class="p"/>
<rect x="407.4" y="556.0" width="6.9" height="6.9" rx="2.2" class="p"/>
<rect x="498.4" y="357.2" width="6.9" height="6.9" rx="2.2" class="p"/>
<rect x="498.4" y="372.5" width="6.9" height="6.9" rx="2.2" class="p"/>
<rect x="498.4" y="387.8" width="6.9" height="6.9" rx="2.2" class="p"/>
<rect x="498.4" y="403.1" width="6.9" height="6.9" rx="2.2" class="p"/>
<rect x="498.4" y="418.4" width="6.9" height="6.9" rx="2.2" class="p"/>
<rect x="498.4" y="433.7" width="6.9" height="6.9" rx="2.2" class="p"/>
<rect x="498.4" y="449.0" width="6.9" height="6.9" rx="2.2" class="p"/>
<rect x="498.4" y="464.3" width="6.9" height="6.9" rx="2.2" class="p"/>
<rect x="498.4" y="479.6" width="6.9" height="6.9" rx="2.2" class="p"/>
<rect x="498.4" y="494.9" width="6.9" height="6.9" rx="2.2" class="p"/>
<rect x="498.4" y="510.2" width="6.9" height="6.9" rx="2.2" class="p"/>
<rect x="498.4" y="525.5" width="6.9" height="6.9" rx="2.2" class="p"/>
<rect x="498.4" y="540.8" width="6.9" height="6.9" rx="2.2" class="p"/>
<rect x="498.4" y="556.0" width="6.9" height="6.9" rx="2.2" class="p"/>
<rect x="535.0" y="352.0" width="76.0" height="214.0" class="b"/>
<rect x="523.3" y="356.3" width="99.7" height="205.7" class="d"/>
<rect x="523.8" y="356.9" width="6.9" height="6.9" rx="1" class="p"/>
<rect x="523.8" y="372.2" width="6.9" height="6.9" rx="2.2" class="p"/>
<rect x="523.8" y="387.6" width="6.9" height="6.9" rx="2.2" class="p"/>
<rect x="523.8" y="402.8" width="6.9" height="6.9" rx="2.2" class="p"/>
<rect x="523.8" y="418.1" width="6.9" height="6.9" rx="2.2" class="p"/>
<rect x="523.8" y="433.4" width="6.9" height="6.9" rx="2.2" class="p"/>
<rect x="523.8" y="448.8" width="6.9" height="6.9" rx="2.2" class="p"/>
<rect x="523.8" y="464.1" width="6.9" height="6.9" rx="2.2" class="p"/>
<rect x="523.8" y="479.3" width="6.9" height="6.9" rx="2.2" class="p"/>
<rect x="523.8" y="494.7" width="6.9" height="6.9" rx="2.2" class="p"/>
<rect x="523.8" y="509.9" width="6.9" height="6.9" rx="2.2" class="p"/>
<rect x="523.8" y="525.2" width="6.9" height="6.9" rx="2.2" class="p"/>
<rect x="523.8" y="540.5" width="6.9" height="6.9" rx="2.2" class="p"/>
<rect x="523.8" y="555.8" width="6.9" height="6.9" rx="2.2" class="p"/>
<rect x="615.1" y="356.9" width="6.9" height="6.9" rx="2.2" class="p"/>
<rect x="615.1" y="372.2" width="6.9" height="6.9" rx="2.2" class="p"/>
<rect x="615.1" y="387.6" width="6.9" height="6.9" rx="2.2" class="p"/>
<rect x="615.1" y="402.8" width="6.9" height="6.9" rx="2.2" class="p"/>
<rect x="615.1" y="418.1" width="6.9" height="6.9" rx="2.2" class="p"/>
<rect x="615.1" y="433.4" width="6.9" height="6.9" rx="2.2" class="p"/>
<rect x="615.1" y="448.8" width="6.9" height="6.9" rx="2.2" class="p"/>
<rect x="615.1" y="464.1" width="6.9" height="6.9" rx="2.2" class="p"/>
<rect x="615.1" y="479.3" width="6.9" height="6.9" rx="2.2" class="p"/>
<rect x="615.1" y="494.7" width="6.9" height="6.9" rx="2.2" class="p"/>
<rect x="615.1" y="509.9" width="6.9" height="6.9" rx="2.2" class="p"/>
<rect x="615.1" y="525.2" width="6.9" height="6.9" rx="2.2" class="p"/>
<rect x="615.1" y="540.5" width="6.9" height="6.9" rx="2.2" class="p"/>
<rect x="615.1" y="555.8" width="6.9" height="6.9" rx="2.2" class="p"/>
<rect x="14.7" y="461.2" width="31.2" height="99.4" class="b"/>
<rect x="25.1" y="471.9" width="10.1" height="77.9" class="d"/>
<rect x="25.5" y="472.3" width="8.4" height="8.4" rx="1" class="p"/>
<rect x="25.5" y="495.2" width="8.4" height="8.4" rx="2.2" class="p"/>
<rect x="25.5" y="518.1" width="8.4" height="8.4" rx="2.2" class="p"/>
<rect x="25.5" y="541.0" width="8.4" height="8.4" rx="2.2" class="p"/>
<rect x="63.3" y="423.0" width="18.4" height="61.1" class="b"/>
<rect x="67.3" y="433.0" width="10.7" height="41.0" class="d"/>
<rect x="68.3" y="434.0" width="8.4" height="8.4" rx="1" class="p"/>
<rect x="68.3" y="464.6" width="8.4" height="8.4" rx="2.2" class="p"/>
<rect x="63.3" y="493.3" width="18.4" height="61.1" class="b"/>
<rect x="67.3" y="504.0" width="10.7" height="39.7" class="d"/>
<rect x="68.3" y="504.4" width="8.4" height="8.4" rx="1" class="p"/>
<rect x="68.3" y="534.9" width="8.4" height="8.4" rx="2.2" class="p"/>
<rect x="120.0" y="455.0" width="30.0" height="107.0" class="b"/>
<rect x="107.6" y="458.7" width="54.5" height="98.8" class="d"/>
<rect x="108.1" y="459.2" width="6.9" height="6.9" rx="1" class="p"/>
<rect x="108.1" y="474.6" width="6.9" height="6.9" rx="2.2" class="p"/>
<rect x="108.1" y="489.9" width="6.9" height="6.9" rx="2.2" class="p"/>
<rect x="108.1" y="505.2" width="6.9" height="6.9" rx="2.2" class="p"/>
<rect x="108.1" y="520.4" width="6.9" height="6.9" rx="2.2" class="p"/>
<rect x="108.1" y="535.8" width="6.9" height="6.9" rx="2.2" class="p"/>
<rect x="108.1" y="551.0" width="6.9" height="6.9" rx="2.2" class="p"/>
<rect x="154.1" y="459.2" width="6.9" height="6.9" rx="2.2" class="p"/>
<rect x="154.1" y="474.6" width="6.9" height="6.9" rx="2.2" class="p"/>
<rect x="154.1" y="489.9" width="6.9" height="6.9" rx="2.2" class="p"/>
<rect x="154.1" y="505.2" width="6.9" height="6.9" rx="2.2" class="p"/>
<rect x="154.1" y="520.4" width="6.9" height="6.9" rx="2.2" class="p"/>
<rect x="154.1" y="535.8" width="6.9" height="6.9" rx="2.2" class="p"/>
<rect x="154.1" y="551.0" width="6.9" height="6.9" rx="2.2" class="p"/>
<rect x="634.2" y="485.6" width="10.7" height="70.4" class="d"/>
<rect x="635.2" y="486.0" width="8.4" height="8.4" rx="1" class="p"/>
<rect x="635.2" y="546.6" width="8.4" height="8.4" rx="2.2" class="p"/>
<circle cx="682.2" cy="493.3" r="30.6" class="b"/>
<path d="M682.2 447.4V462.7M673.6 455H690.5" class="b"/>
<rect x="677.0" y="473.4" width="10.4" height="39.7" class="d"/>
<rect x="678.0" y="473.8" width="8.4" height="8.4" rx="1" class="p"/>
<rect x="678.0" y="503.8" width="8.4" height="8.4" rx="2.2" class="p"/>
<rect x="657.7" y="539.1" width="54.5" height="22.9" class="b"/>
<rect x="664.8" y="545.9" width="40.9" height="10.1" class="d"/>
<rect x="665.8" y="546.6" width="8.4" height="8.4" rx="1" class="p"/>
<rect x="696.4" y="546.6" width="8.4" height="8.4" rx="2.2" class="p"/>
<circle cx="117.2" cy="119.0" r="2.1" class="v"/>
<circle cx="117.2" cy="119.0" r="2.1" class="v"/>
<circle cx="223.9" cy="117.0" r="2.1" class="v"/>
<circle cx="223.9" cy="147.6" r="2.1" class="v"/>
<circle cx="362.2" cy="89.0" r="2.1" class="v"/>
<circle cx="364.3" cy="157.3" r="2.1" class="v"/>
<circle cx="407.6" cy="137.4" r="2.1" class="v"/>
<circle cx="402.5" cy="151.4" r="2.1" class="v"/>
<circle cx="396.6" cy="92.0" r="2.1" class="v"/>
<circle cx="400.4" cy="106.8" r="2.1" class="v"/>
<circle cx="403.2" cy="116.5" r="2.1" class="v"/>
<circle cx="401.2" cy="131.5" r="2.1" class="v"/>
<circle cx="442.0" cy="124.6" r="2.1" class="v"/>
<circle cx="310.8" cy="139.4" r="2.1" class="v"/>
<circle cx="412.7" cy="129.7" r="2.1" class="v"/>
<circle cx="415.2" cy="129.7" r="2.1" class="v"/>
<circle cx="392.3" cy="94.1" r="2.1" class="v"/>
<circle cx="397.4" cy="99.2" r="2.1" class="v"/>
<circle cx="545.2" cy="124.6" r="2.1" class="v"/>
<circle cx="442.0" cy="125.2" r="2.1" class="v"/>
<circle cx="415.3" cy="129.7" r="2.1" class="v"/>
<circle cx="545.1" cy="124.6" r="2.1" class="v"/>
<circle cx="613.9" cy="113.2" r="2.1" class="v"/>
<circle cx="91.7" cy="203.7" r="2.1" class="v"/>
<circle cx="237.9" cy="184.8" r="2.1" class="v"/>
<circle cx="201.0" cy="238.3" r="2.1" class="v"/>
<circle cx="268.5" cy="158.8" r="2.1" class="v"/>
<circle cx="239.2" cy="181.0" r="2.1" class="v"/>
<circle cx="244.3" cy="199.3" r="2.1" class="v"/>
<circle cx="251.4" cy="226.8" r="2.1" class="v"/>
<circle cx="279.9" cy="202.1" r="2.1" class="v"/>
<circle cx="282.5" cy="216.6" r="2.1" class="v"/>
<circle cx="280.4" cy="231.9" r="2.1" class="v"/>
<circle cx="310.5" cy="139.7" r="2.1" class="v"/>
<circle cx="298.5" cy="181.0" r="2.1" class="v"/>
<circle cx="328.3" cy="231.9" r="2.1" class="v"/>
<circle cx="236.6" cy="188.6" r="2.1" class="v"/>
<circle cx="262.1" cy="244.6" r="2.1" class="v"/>
<circle cx="310.8" cy="139.7" r="2.1" class="v"/>
<circle cx="298.5" cy="181.0" r="2.1" class="v"/>
<circle cx="335.0" cy="267.6" r="2.1" class="v"/>
<circle cx="347.7" cy="195.7" r="2.1" class="v"/>
<circle cx="365.5" cy="157.3" r="2.1" class="v"/>
<circle cx="428.0" cy="183.5" r="2.1" class="v"/>
<circle cx="393.6" cy="173.8" r="2.1" class="v"/>
<circle cx="389.7" cy="270.1" r="2.1" class="v"/>
<circle cx="397.4" cy="234.5" r="2.1" class="v"/>
<circle cx="443.2" cy="179.2" r="2.1" class="v"/>
<circle cx="435.6" cy="211.5" r="2.1" class="v"/>
<circle cx="319.7" cy="270.1" r="2.1" class="v"/>
<circle cx="333.7" cy="267.6" r="2.1" class="v"/>
<circle cx="280.2" cy="202.6" r="2.1" class="v"/>
<circle cx="282.2" cy="216.6" r="2.1" class="v"/>
<circle cx="389.7" cy="142.7" r="2.1" class="v"/>
<circle cx="371.9" cy="145.3" r="2.1" class="v"/>
<circle cx="347.7" cy="195.7" r="2.1" class="v"/>
<circle cx="410.9" cy="252.3" r="2.1" class="v"/>
<circle cx="422.9" cy="186.1" r="2.1" class="v"/>
<circle cx="443.3" cy="178.4" r="2.1" class="v"/>
<circle cx="435.7" cy="211.5" r="2.1" class="v"/>
<circle cx="473.9" cy="169.5" r="2.1" class="v"/>
<circle cx="474.6" cy="205.2" r="2.1" class="v"/>
<circle cx="495.5" cy="223.8" r="2.1" class="v"/>
<circle cx="545.2" cy="144.0" r="2.1" class="v"/>
<circle cx="550.3" cy="202.6" r="2.1" class="v"/>
<circle cx="555.4" cy="223.0" r="2.1" class="v"/>
<circle cx="578.3" cy="240.8" r="2.1" class="v"/>
<circle cx="422.9" cy="182.2" r="2.1" class="v"/>
<circle cx="523.6" cy="177.1" r="2.1" class="v"/>
<circle cx="523.6" cy="197.5" r="2.1" class="v"/>
<circle cx="518.5" cy="160.1" r="2.1" class="v"/>
<circle cx="448.4" cy="178.4" r="2.1" class="v"/>
<circle cx="435.7" cy="211.5" r="2.1" class="v"/>
<circle cx="552.9" cy="206.4" r="2.1" class="v"/>
<circle cx="471.3" cy="272.7" r="2.1" class="v"/>
<circle cx="550.2" cy="202.6" r="2.1" class="v"/>
<circle cx="548.9" cy="226.8" r="2.1" class="v"/>
<circle cx="578.2" cy="240.8" r="2.1" class="v"/>
<circle cx="599.1" cy="203.9" r="2.1" class="v"/>
<circle cx="588.4" cy="221.7" r="2.1" class="v"/>
<circle cx="641.9" cy="276.5" r="2.1" class="v"/>
<circle cx="542.0" cy="249.7" r="2.1" class="v"/>
<circle cx="624.1" cy="175.9" r="2.1" class="v"/>
<circle cx="66.2" cy="313.3" r="2.1" class="v"/>
<circle cx="84.1" cy="278.9" r="2.1" class="v"/>
<circle cx="204.8" cy="298.2" r="2.1" class="v"/>
<circle cx="313.1" cy="313.5" r="2.1" class="v"/>
<circle cx="320.2" cy="310.2" r="2.1" class="v"/>
<circle cx="315.6" cy="351.7" r="2.1" class="v"/>
<circle cx="283.8" cy="353.0" r="2.1" class="v"/>
<circle cx="209.4" cy="376.7" r="2.1" class="v"/>
<circle cx="225.2" cy="367.8" r="2.1" class="v"/>
<circle cx="325.8" cy="285.5" r="2.1" class="v"/>
<circle cx="301.1" cy="278.3" r="2.1" class="v"/>
<circle cx="320.2" cy="270.7" r="2.1" class="v"/>
<circle cx="208.6" cy="377.2" r="2.1" class="v"/>
<circle cx="300.6" cy="278.3" r="2.1" class="v"/>
<circle cx="319.7" cy="270.7" r="2.1" class="v"/>
<circle cx="333.7" cy="267.1" r="2.1" class="v"/>
<circle cx="357.9" cy="301.3" r="2.1" class="v"/>
<circle cx="326.6" cy="285.5" r="2.1" class="v"/>
<circle cx="354.8" cy="308.4" r="2.1" class="v"/>
<circle cx="402.5" cy="270.2" r="2.1" class="v"/>
<circle cx="396.6" cy="293.1" r="2.1" class="v"/>
<circle cx="412.2" cy="349.2" r="2.1" class="v"/>
<circle cx="315.9" cy="352.2" r="2.1" class="v"/>
<circle cx="284.0" cy="353.0" r="2.1" class="v"/>
<circle cx="357.9" cy="295.7" r="2.1" class="v"/>
<circle cx="357.9" cy="295.7" r="2.1" class="v"/>
<circle cx="476.4" cy="328.8" r="2.1" class="v"/>
<circle cx="484.1" cy="282.9" r="2.1" class="v"/>
<circle cx="476.4" cy="277.3" r="2.1" class="v"/>
<circle cx="490.4" cy="321.1" r="2.1" class="v"/>
<circle cx="412.7" cy="349.2" r="2.1" class="v"/>
<circle cx="550.3" cy="265.1" r="2.1" class="v"/>
<circle cx="524.8" cy="280.4" r="2.1" class="v"/>
<circle cx="575.8" cy="336.4" r="2.1" class="v"/>
<circle cx="552.9" cy="294.4" r="2.1" class="v"/>
<circle cx="575.8" cy="332.6" r="2.1" class="v"/>
<circle cx="558.0" cy="360.6" r="2.1" class="v"/>
<circle cx="566.9" cy="354.3" r="2.1" class="v"/>
<circle cx="572.0" cy="378.5" r="2.1" class="v"/>
<circle cx="591.1" cy="377.2" r="2.1" class="v"/>
<circle cx="476.4" cy="275.3" r="2.1" class="v"/>
<circle cx="552.9" cy="323.7" r="2.1" class="v"/>
<circle cx="476.4" cy="341.5" r="2.1" class="v"/>
<circle cx="641.9" cy="276.6" r="2.1" class="v"/>
<circle cx="631.7" cy="267.6" r="2.1" class="v"/>
<circle cx="641.9" cy="402.7" r="2.1" class="v"/>
<circle cx="616.4" cy="351.7" r="2.1" class="v"/>
<circle cx="638.1" cy="327.5" r="2.1" class="v"/>
<circle cx="598.6" cy="321.1" r="2.1" class="v"/>
<circle cx="565.5" cy="270.2" r="2.1" class="v"/>
<circle cx="575.7" cy="332.6" r="2.1" class="v"/>
<circle cx="554.0" cy="294.4" r="2.1" class="v"/>
<circle cx="573.1" cy="331.3" r="2.1" class="v"/>
<circle cx="566.8" cy="354.8" r="2.1" class="v"/>
<circle cx="591.0" cy="356.8" r="2.1" class="v"/>
<circle cx="571.8" cy="378.5" r="2.1" class="v"/>
<circle cx="591.0" cy="377.2" r="2.1" class="v"/>
<circle cx="588.4" cy="326.2" r="2.1" class="v"/>
<circle cx="598.6" cy="336.4" r="2.1" class="v"/>
<circle cx="81.0" cy="419.0" r="2.1" class="v"/>
<circle cx="131.5" cy="439.8" r="2.1" class="v"/>
<circle cx="126.9" cy="464.2" r="2.1" class="v"/>
<circle cx="111.6" cy="470.3" r="2.1" class="v"/>
<circle cx="131.5" cy="439.8" r="2.1" class="v"/>
<circle cx="352.6" cy="493.3" r="2.1" class="v"/>
<circle cx="396.9" cy="539.1" r="2.1" class="v"/>
<circle cx="400.0" cy="405.5" r="2.1" class="v"/>
<circle cx="435.1" cy="404.6" r="2.1" class="v"/>
<circle cx="435.1" cy="404.6" r="2.1" class="v"/>
<circle cx="352.6" cy="493.3" r="2.1" class="v"/>
<circle cx="490.8" cy="453.5" r="2.1" class="v"/>
<circle cx="594.8" cy="467.3" r="2.1" class="v"/>
<circle cx="434.6" cy="404.6" r="2.1" class="v"/>
<circle cx="418.3" cy="528.4" r="2.1" class="v"/>
<circle cx="476.5" cy="448.9" r="2.1" class="v"/>
<circle cx="476.5" cy="450.5" r="2.1" class="v"/>
<circle cx="491.7" cy="455.0" r="2.1" class="v"/>
<circle cx="487.2" cy="496.3" r="2.1" class="v"/>
<circle cx="422.9" cy="528.4" r="2.1" class="v"/>
<circle cx="628.7" cy="456.6" r="2.1" class="v"/>
<circle cx="628.7" cy="456.6" r="2.1" class="v"/>
<circle cx="595.0" cy="466.7" r="2.1" class="v"/>
<circle cx="628.7" cy="461.2" r="2.1" class="v"/>
<circle cx="628.7" cy="452.0" r="2.1" class="v"/>
<circle cx="628.7" cy="452.0" r="2.1" class="v"/>
<circle cx="628.7" cy="452.0" r="2.1" class="v"/>
<circle cx="595.0" cy="466.7" r="2.1" class="v"/>
<circle cx="326.6" cy="285.5" r="2.1" class="v"/>
<rect x="16" y="21.5" width="701.5" height="547.3" fill="none" stroke="#e6e6e6" stroke-width="1.4"/>
<path d="M415.1 136.6L408.5 146.3L402.1 151.7M408.5 146.3L415.4 153.2" stroke="#f5ea00" stroke-width="2.8" fill="none" stroke-linecap="round"/>
<path d="M533.8 168.2L529.4 176L533.8 184" stroke="#f5ea00" stroke-width="2.8" fill="none" stroke-linecap="round"/>
</svg>
<div id="dlg" style="position:absolute;left:726px;top:142px;width:766px;height:428.4px;background:#fff;color:#3b3b3b;font-family:'Liberation Sans',sans-serif">
<div style="position:absolute;left:2.2999999999999545px;top:3.5px;width:162.8px;height:21.6px;border:4.2px solid #137b77;border-radius:3px"></div>
<svg width="20" height="20" style="position:absolute;left:5px;top:9px" viewBox="0 0 20 20"><path d="M1.5 3.3H13.2Q14.6 3.3 14.6 4.7V6.6M1.5 7.6H13M1.5 15.3H12.5" fill="none" stroke="#3f52d1" stroke-width="1.2"/><path d="M14.3 8.7V13.2" stroke="#c42a2a" stroke-width="1.5"/><circle cx="14.3" cy="15" r="0.9" fill="#c42a2a"/></svg>
<div style="position:absolute;left:27.600000000000023px;top:11px;font-weight:bold;font-size:13px;letter-spacing:-0.22px;color:#1c1c1c;white-space:nowrap;line-height:16px">Список ошибок (0,0,9)</div>
<svg width="40" height="14" style="position:absolute;left:712px;top:12px" viewBox="0 0 40 14"><rect x="2.5" y="2.5" width="9.5" height="9.5" rx="1" fill="none" stroke="#333" stroke-width="1.2"/><path d="M31 3L39 11M39 3L31 11" stroke="#333" stroke-width="1.2"/></svg>
<div style="position:absolute;left:10.799999999999955px;top:42.5px;width:101.30000000000007px;height:26.7px;background:#badcd9;border-radius:6px"></div>
<svg width="10" height="16" style="position:absolute;left:21px;top:48px" viewBox="747 190 10 16"><path d="M750.7 192H753.2L752.5 200H751.4Z" fill="#c22a2a"/><circle cx="751.95" cy="202.6" r="1.25" fill="#c22a2a"/></svg>
<div style="position:absolute;left:40.39999999999998px;top:48px;font-size:12.5px;color:#4d535e;white-space:nowrap;line-height:16px">Ошибок : 0</div>
<div style="position:absolute;left:122.70000000000005px;top:42.5px;width:158.29999999999995px;height:26.7px;background:#badcd9;border-radius:6px"></div>
<svg width="18" height="16" style="position:absolute;left:129px;top:48px" viewBox="0 0 18 16"><path d="M9 1.5L16.5 14.5H1.5Z" fill="none" stroke="#8d6a17" stroke-width="1.3" stroke-linejoin="round"/><path d="M9 6V10.5" stroke="#555" stroke-width="1.5"/><circle cx="9" cy="12.5" r="0.9" fill="#555"/></svg>
<div style="position:absolute;left:152.29999999999995px;top:48px;font-size:12.85px;color:#4d535e;white-space:nowrap;line-height:16px">Предупреждений : 0</div>
<div style="position:absolute;left:291.79999999999995px;top:42.5px;width:123.70000000000005px;height:26.7px;background:#badcd9;border-radius:6px"></div>
<svg width="18" height="18" viewBox="0 0 18 18" style="position:absolute;left:298px;top:46.599999999999994px"><circle cx="9" cy="9" r="7.6" fill="none" stroke="#3d55cf" stroke-width="1.2"/><circle cx="9.6" cy="5.4" r="0.9" fill="#3d55cf"/><path d="M8.2 7.8H9.3L8.3 12.2Q8.2 13 9 12.7L10.2 12.2" fill="none" stroke="#3d55cf" stroke-width="1.1" stroke-linecap="round"/></svg>
<div style="position:absolute;left:321.4000000000001px;top:48px;font-size:12.5px;color:#4d535e;white-space:nowrap;line-height:16px">Сообщений : 9</div>
<div style="position:absolute;left:116.79999999999995px;top:47.5px;width:1px;height:17px;background:#c5d1d1"></div>
<div style="position:absolute;left:285.9px;top:47.5px;width:1px;height:17px;background:#c5d1d1"></div>
<div style="position:absolute;left:419.79999999999995px;top:47.5px;width:1px;height:17px;background:#c5d1d1"></div>
<div style="position:absolute;left:456.9000000000001px;top:47.5px;width:1px;height:17px;background:#c5d1d1"></div>
<div style="position:absolute;left:494.0px;top:47.5px;width:1px;height:17px;background:#c5d1d1"></div>
<svg width="100" height="22" style="position:absolute;left:424px;top:45px" viewBox="1150 187 100 22"><path d="M1161.4 194.6V203.6H1166.3M1161.4 197.4H1166.3" fill="none" stroke="#4a4f55" stroke-width="1.2"/><rect x="1159.3" y="190.3" width="4.6" height="4.3" rx="1" fill="#dfe6f5" stroke="#3f57d0" stroke-width="1.3"/><rect x="1166.3" y="195.3" width="4.6" height="4.3" rx="1" fill="#dfe6f5" stroke="#3f57d0" stroke-width="1.3"/><rect x="1166.3" y="201.3" width="4.6" height="4.3" rx="1" fill="#dfe6f5" stroke="#3f57d0" stroke-width="1.3"/><path d="M1195.8 192.2Q1195.8 191.3 1196.8 191.3H1206.3L1208.2 193.2V203.9Q1208.2 204.9 1207.2 204.9H1196.8Q1195.8 204.9 1195.8 203.9Z" fill="#e3e7e7" stroke="#4c5252" stroke-width="1.4"/><path d="M1198.6 191.5V195.1H1205V191.5" fill="#fff" stroke="#4c5252" stroke-width="1.2"/><path d="M1198.3 204.7V199.4H1205.6V204.7" fill="#fff" stroke="#4c5252" stroke-width="1.2"/><path d="M1232.9 192.4H1244.9M1236.9 192.2Q1236.9 190 1238.9 190Q1240.9 190 1240.9 192.2M1234.1 193V204Q1234.1 205.6 1235.7 205.6H1242.1Q1243.7 205.6 1243.7 204V193M1237.3 194.6V203.2M1240.6 194.6V203.2" fill="none" stroke="#c43a3a" stroke-width="1.25"/></svg>
<div style="position:absolute;left:609.4000000000001px;top:48px;font-size:12.9px;color:#3b3b3b;white-space:nowrap;line-height:16px">Текущий редактор</div>
<svg width="12" height="4" style="position:absolute;left:737.5px;top:54px" viewBox="0 0 12 4"><circle cx="1.6" cy="2" r="1.3" fill="#333"/><circle cx="5" cy="2" r="1.3" fill="#333"/><circle cx="8.4" cy="2" r="1.3" fill="#333"/></svg>
<div style="position:absolute;left:5px;top:72.80000000000001px;width:756px;height:1.3px;background:#c8d7d6"></div>
<div style="position:absolute;left:5px;top:103.0px;width:756px;height:1.3px;background:#c8d7d6"></div>
<div style="position:absolute;left:5px;top:132.0px;width:756px;height:1.3px;background:#c8d7d6"></div>
<div style="position:absolute;left:5px;top:161.0px;width:756px;height:1.3px;background:#c8d7d6"></div>
<div style="position:absolute;left:5px;top:190.0px;width:756px;height:1.3px;background:#c8d7d6"></div>
<div style="position:absolute;left:5px;top:219.0px;width:756px;height:1.3px;background:#c8d7d6"></div>
<div style="position:absolute;left:5px;top:248.0px;width:756px;height:1.3px;background:#c8d7d6"></div>
<div style="position:absolute;left:5px;top:277.0px;width:756px;height:1.3px;background:#c8d7d6"></div>
<div style="position:absolute;left:5px;top:306.0px;width:756px;height:1.3px;background:#c8d7d6"></div>
<div style="position:absolute;left:5px;top:335.0px;width:756px;height:1.3px;background:#c8d7d6"></div>
<div style="position:absolute;left:5px;top:364.0px;width:756px;height:1.3px;background:#c8d7d6"></div>
<div style="position:absolute;left:43.799999999999976px;top:73.30000000000001px;width:1.3px;height:291.2px;background:#c8d7d6"></div>
<div style="position:absolute;left:219.69999999999996px;top:73.30000000000001px;width:1.3px;height:291.2px;background:#c8d7d6"></div>
<div style="position:absolute;left:274.69999999999993px;top:73.30000000000001px;width:1.3px;height:291.2px;background:#c8d7d6"></div>
<div style="position:absolute;left:755.1999999999999px;top:73.30000000000001px;width:1.3px;height:291.2px;background:#c8d7d6"></div>
<div style="position:absolute;left:11.600000000000023px;top:81px;font-weight:bold;font-size:12px;color:#333;white-space:nowrap;line-height:16px">Тип</div>
<div style="position:absolute;left:50.299999999999955px;top:81px;font-weight:bold;font-size:12px;color:#333;white-space:nowrap;line-height:16px">Тип</div>
<div style="position:absolute;left:227.29999999999995px;top:81px;font-weight:bold;font-size:12px;color:#333;white-space:nowrap;line-height:16px">Плата</div>
<div style="position:absolute;left:282px;top:81px;font-weight:bold;font-size:12px;color:#333;white-space:nowrap;line-height:16px">Описание</div>
<div style="position:absolute;left:5px;top:103.80000000000001px;width:37.8px;height:26.5px;background:#ececec;border:1.3px solid #1a8a80"></div>
<svg width="18" height="18" viewBox="0 0 18 18" style="position:absolute;left:16px;top:109.0px"><circle cx="9" cy="9" r="7.6" fill="none" stroke="#3d55cf" stroke-width="1.2"/><circle cx="9.6" cy="5.4" r="0.9" fill="#3d55cf"/><path d="M8.2 7.8H9.3L8.3 12.2Q8.2 13 9 12.7L10.2 12.2" fill="none" stroke="#3d55cf" stroke-width="1.1" stroke-linecap="round"/></svg>
<div style="position:absolute;left:53.700000000000045px;top:110.5px;font-size:12.5px;white-space:nowrap;line-height:16px">TopoR. нарушение зазоров</div>
<div style="position:absolute;left:229.29999999999995px;top:110.5px;font-size:12.1px;white-space:nowrap;line-height:16px">MinVia</div>
<div style="position:absolute;left:284.29999999999995px;top:110.5px;font-size:12.75px;white-space:nowrap;line-height:16px">Быстрая проверка: нарушение DRC (198,3039, 203,8362)[мм] на слое 'Bottom'</div>
<svg width="18" height="18" viewBox="0 0 18 18" style="position:absolute;left:16px;top:138.0px"><circle cx="9" cy="9" r="7.6" fill="none" stroke="#3d55cf" stroke-width="1.2"/><circle cx="9.6" cy="5.4" r="0.9" fill="#3d55cf"/><path d="M8.2 7.8H9.3L8.3 12.2Q8.2 13 9 12.7L10.2 12.2" fill="none" stroke="#3d55cf" stroke-width="1.1" stroke-linecap="round"/></svg>
<div style="position:absolute;left:53.700000000000045px;top:139.5px;font-size:12.5px;white-space:nowrap;line-height:16px">TopoR. нарушение зазоров</div>
<div style="position:absolute;left:229.29999999999995px;top:139.5px;font-size:12.1px;white-space:nowrap;line-height:16px">MinVia</div>
<div style="position:absolute;left:284.29999999999995px;top:139.5px;font-size:12.75px;white-space:nowrap;line-height:16px">Быстрая проверка: нарушение DRC (198,3039, 202,5662)[мм] на слое 'Bottom'</div>
<svg width="18" height="18" viewBox="0 0 18 18" style="position:absolute;left:16px;top:167.0px"><circle cx="9" cy="9" r="7.6" fill="none" stroke="#3d55cf" stroke-width="1.2"/><circle cx="9.6" cy="5.4" r="0.9" fill="#3d55cf"/><path d="M8.2 7.8H9.3L8.3 12.2Q8.2 13 9 12.7L10.2 12.2" fill="none" stroke="#3d55cf" stroke-width="1.1" stroke-linecap="round"/></svg>
<div style="position:absolute;left:53.700000000000045px;top:168.5px;font-size:12.5px;white-space:nowrap;line-height:16px">TopoR. нарушение зазоров</div>
<div style="position:absolute;left:229.29999999999995px;top:168.5px;font-size:12.1px;white-space:nowrap;line-height:16px">MinVia</div>
<div style="position:absolute;left:284.29999999999995px;top:168.5px;font-size:12.75px;white-space:nowrap;line-height:16px">Быстрая проверка: нарушение DRC (178,2006, 208,9326)[мм] на слое 'Bottom'</div>
<svg width="18" height="18" viewBox="0 0 18 18" style="position:absolute;left:16px;top:196.0px"><circle cx="9" cy="9" r="7.6" fill="none" stroke="#3d55cf" stroke-width="1.2"/><circle cx="9.6" cy="5.4" r="0.9" fill="#3d55cf"/><path d="M8.2 7.8H9.3L8.3 12.2Q8.2 13 9 12.7L10.2 12.2" fill="none" stroke="#3d55cf" stroke-width="1.1" stroke-linecap="round"/></svg>
<div style="position:absolute;left:53.700000000000045px;top:197.5px;font-size:12.5px;white-space:nowrap;line-height:16px">TopoR. нарушение зазоров</div>
<div style="position:absolute;left:229.29999999999995px;top:197.5px;font-size:12.1px;white-space:nowrap;line-height:16px">MinVia</div>
<div style="position:absolute;left:284.29999999999995px;top:197.5px;font-size:12.75px;white-space:nowrap;line-height:16px">Быстрая проверка: нарушение DRC (177,2135, 207,7615)[мм] на слое 'Bottom'</div>
<svg width="18" height="18" viewBox="0 0 18 18" style="position:absolute;left:16px;top:225.0px"><circle cx="9" cy="9" r="7.6" fill="none" stroke="#3d55cf" stroke-width="1.2"/><circle cx="9.6" cy="5.4" r="0.9" fill="#3d55cf"/><path d="M8.2 7.8H9.3L8.3 12.2Q8.2 13 9 12.7L10.2 12.2" fill="none" stroke="#3d55cf" stroke-width="1.1" stroke-linecap="round"/></svg>
<div style="position:absolute;left:53.700000000000045px;top:226.5px;font-size:12.5px;white-space:nowrap;line-height:16px">TopoR. нарушение зазоров</div>
<div style="position:absolute;left:229.29999999999995px;top:226.5px;font-size:12.1px;white-space:nowrap;line-height:16px">MinVia</div>
<div style="position:absolute;left:284.29999999999995px;top:226.5px;font-size:12.75px;white-space:nowrap;line-height:16px">Быстрая проверка: нарушение DRC (178,2006, 207,6626)[мм] на слое 'Bottom'</div>
<svg width="18" height="18" viewBox="0 0 18 18" style="position:absolute;left:16px;top:254.0px"><circle cx="9" cy="9" r="7.6" fill="none" stroke="#3d55cf" stroke-width="1.2"/><circle cx="9.6" cy="5.4" r="0.9" fill="#3d55cf"/><path d="M8.2 7.8H9.3L8.3 12.2Q8.2 13 9 12.7L10.2 12.2" fill="none" stroke="#3d55cf" stroke-width="1.1" stroke-linecap="round"/></svg>
<div style="position:absolute;left:53.700000000000045px;top:255.5px;font-size:12.5px;white-space:nowrap;line-height:16px">TopoR. нарушение зазоров</div>
<div style="position:absolute;left:229.29999999999995px;top:255.5px;font-size:12.1px;white-space:nowrap;line-height:16px">MinVia</div>
<div style="position:absolute;left:284.29999999999995px;top:255.5px;font-size:12.75px;white-space:nowrap;line-height:16px">Быстрая проверка: нарушение DRC (198,3039, 203,8362)[мм] на слое 'Top'</div>
<svg width="18" height="18" viewBox="0 0 18 18" style="position:absolute;left:16px;top:283.0px"><circle cx="9" cy="9" r="7.6" fill="none" stroke="#3d55cf" stroke-width="1.2"/><circle cx="9.6" cy="5.4" r="0.9" fill="#3d55cf"/><path d="M8.2 7.8H9.3L8.3 12.2Q8.2 13 9 12.7L10.2 12.2" fill="none" stroke="#3d55cf" stroke-width="1.1" stroke-linecap="round"/></svg>
<div style="position:absolute;left:53.700000000000045px;top:284.5px;font-size:12.5px;white-space:nowrap;line-height:16px">TopoR. нарушение зазоров</div>
<div style="position:absolute;left:229.29999999999995px;top:284.5px;font-size:12.1px;white-space:nowrap;line-height:16px">MinVia</div>
<div style="position:absolute;left:284.29999999999995px;top:284.5px;font-size:12.75px;white-space:nowrap;line-height:16px">Быстрая проверка: нарушение DRC (198,3039, 202,5662)[мм] на слое 'Top'</div>
<svg width="18" height="18" viewBox="0 0 18 18" style="position:absolute;left:16px;top:312.0px"><circle cx="9" cy="9" r="7.6" fill="none" stroke="#3d55cf" stroke-width="1.2"/><circle cx="9.6" cy="5.4" r="0.9" fill="#3d55cf"/><path d="M8.2 7.8H9.3L8.3 12.2Q8.2 13 9 12.7L10.2 12.2" fill="none" stroke="#3d55cf" stroke-width="1.1" stroke-linecap="round"/></svg>
<div style="position:absolute;left:53.700000000000045px;top:313.5px;font-size:12.5px;white-space:nowrap;line-height:16px">TopoR. нарушение зазоров</div>
<div style="position:absolute;left:229.29999999999995px;top:313.5px;font-size:12.1px;white-space:nowrap;line-height:16px">MinVia</div>
<div style="position:absolute;left:284.29999999999995px;top:313.5px;font-size:12.75px;white-space:nowrap;line-height:16px">Быстрая проверка: нарушение DRC (177,2135, 207,7615)[мм] на слое 'Top'</div>
<svg width="18" height="18" viewBox="0 0 18 18" style="position:absolute;left:16px;top:341.0px"><circle cx="9" cy="9" r="7.6" fill="none" stroke="#3d55cf" stroke-width="1.2"/><circle cx="9.6" cy="5.4" r="0.9" fill="#3d55cf"/><path d="M8.2 7.8H9.3L8.3 12.2Q8.2 13 9 12.7L10.2 12.2" fill="none" stroke="#3d55cf" stroke-width="1.1" stroke-linecap="round"/></svg>
<div style="position:absolute;left:53.700000000000045px;top:342.5px;font-size:12.5px;white-space:nowrap;line-height:16px">TopoR. нарушение зазоров</div>
<div style="position:absolute;left:229.29999999999995px;top:342.5px;font-size:12.1px;white-space:nowrap;line-height:16px">MinVia</div>
<div style="position:absolute;left:284.29999999999995px;top:342.5px;font-size:12.75px;white-space:nowrap;line-height:16px">Быстрая проверка: нарушение DRC (178,2006, 207,6626)[мм] на слое 'Top'</div>
</div>
</body></html>
